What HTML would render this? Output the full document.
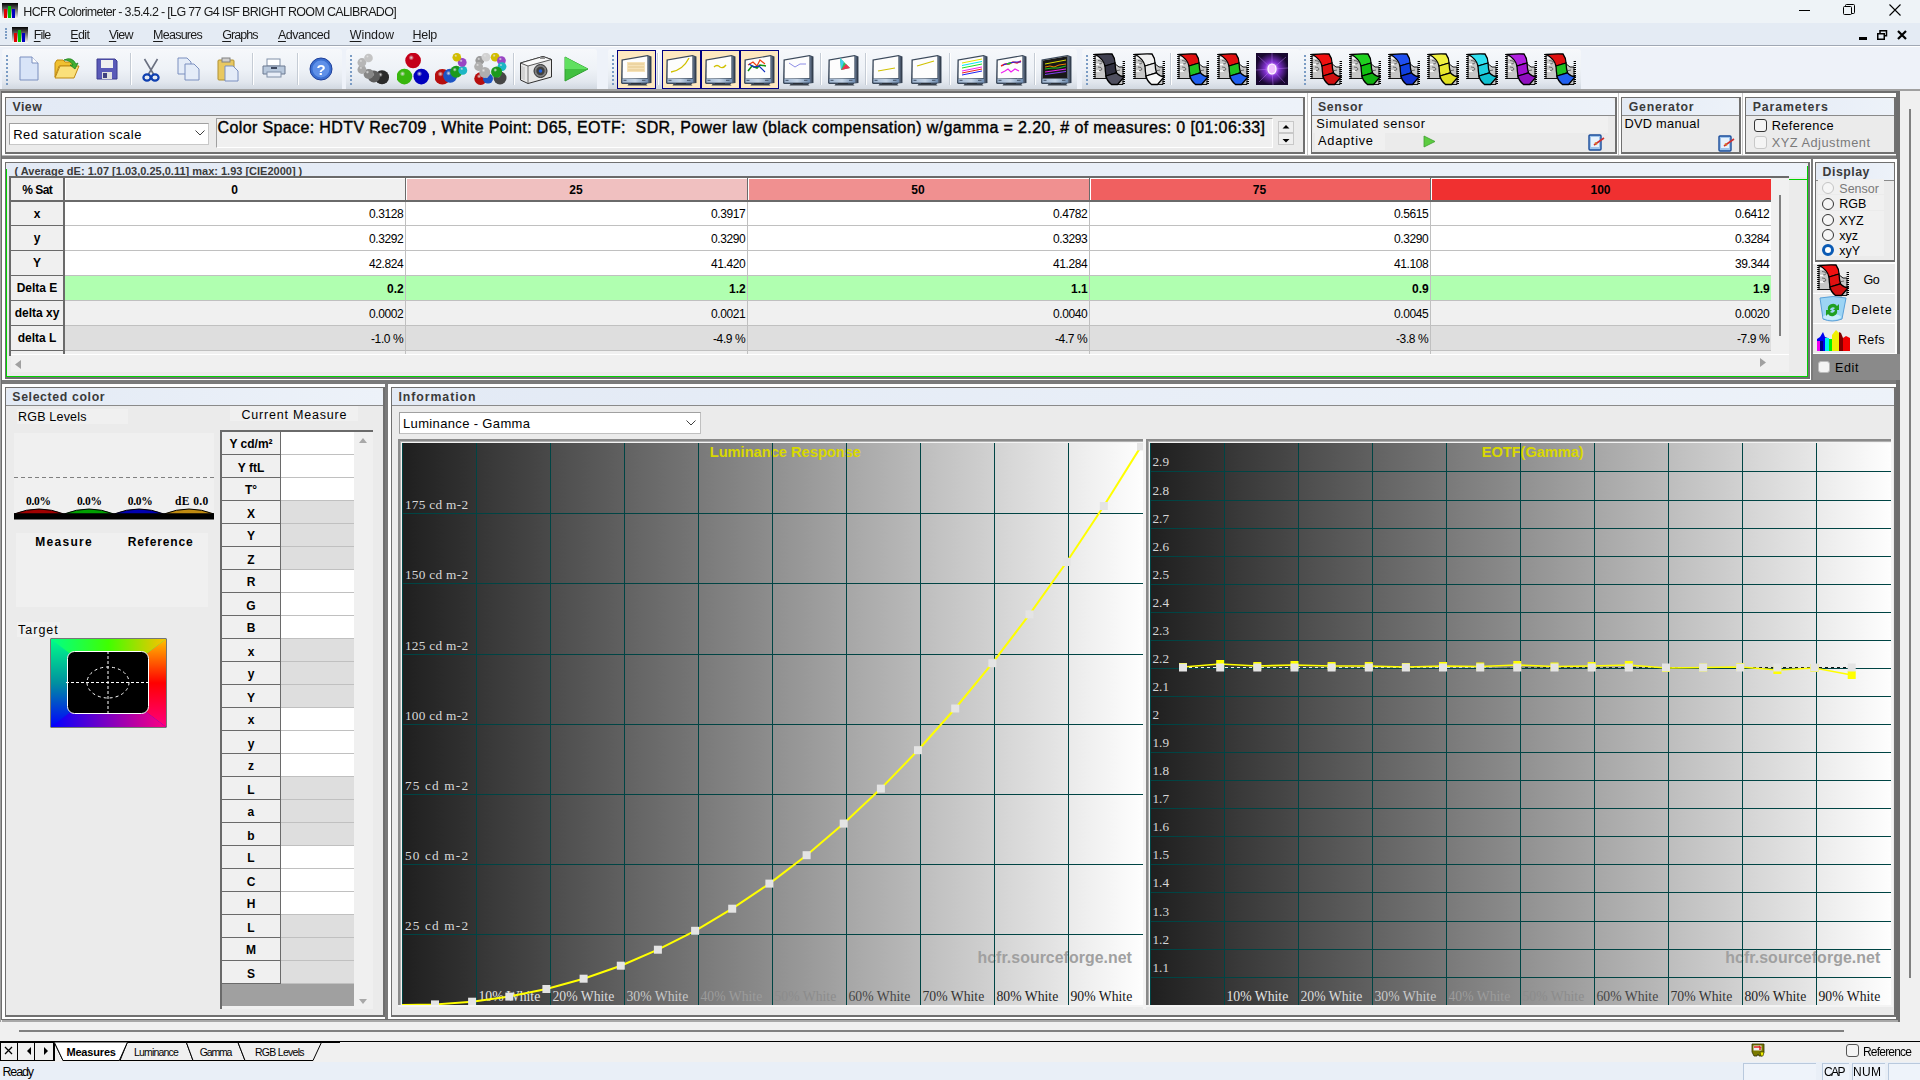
<!DOCTYPE html><html><head><meta charset="utf-8"><style>
*{margin:0;padding:0;box-sizing:border-box}
html,body{width:1920px;height:1080px;overflow:hidden;background:#f0f0f0;font-family:"Liberation Sans", sans-serif;}
.a{position:absolute}
.t{white-space:pre;line-height:1;font-size:12px;color:#000}
</style></head><body><div class="a" style="left:0px;top:0px;width:1920px;height:23px;background:#eef3f7"></div>
<svg class="a" style="left:2px;top:3px" width="16" height="16" viewBox="0 0 16 16"><defs><linearGradient id="hg" x1="0" y1="0" x2="0" y2="1"><stop offset="0" stop-color="#000"/><stop offset="1" stop-color="#fff"/></linearGradient></defs><rect x="0" y="0" width="16" height="16" fill="url(#hg)"/><rect x="2" y="6" width="3" height="9" fill="#e00000"/><rect x="6" y="3" width="3" height="12" fill="#00c000"/><rect x="10" y="6" width="3" height="9" fill="#0000c0"/></svg>
<div class="a t" style="left:23.30px;top:5.76px;font-size:12.5px;color:#1a1a1a;letter-spacing:-0.663px;">HCFR Colorimeter - 3.5.4.2 - [LG 77 G4 ISF BRIGHT ROOM CALIBRADO]</div>
<div class="a" style="left:1799px;top:10px;width:11px;height:1px;background:#000"></div>
<svg class="a" style="left:1843px;top:4px" width="12" height="12" viewBox="0 0 12 12"><rect x="0.5" y="2.5" width="8" height="8" rx="1" fill="none" stroke="#000"/><path d="M2.5 2.5 V1.5 Q2.5 0.5 3.5 0.5 H10.5 Q11.5 0.5 11.5 1.5 V8.5 Q11.5 9.5 10.5 9.5 H8.5" fill="none" stroke="#000"/></svg>
<svg class="a" style="left:1889px;top:4px" width="12" height="12" viewBox="0 0 12 12"><path d="M0.5 0.5 L11.5 11.5 M11.5 0.5 L0.5 11.5" stroke="#000" stroke-width="1.1"/></svg>
<div class="a" style="left:0px;top:23px;width:1920px;height:22px;background:#e4ebf4"></div>
<div class="a" style="left:5px;top:28px;width:2px;height:2px;background:#7b9cc4"></div>
<div class="a" style="left:5px;top:31px;width:2px;height:2px;background:#7b9cc4"></div>
<div class="a" style="left:5px;top:34px;width:2px;height:2px;background:#7b9cc4"></div>
<div class="a" style="left:5px;top:37px;width:2px;height:2px;background:#7b9cc4"></div>
<svg class="a" style="left:12px;top:27px" width="16" height="16" viewBox="0 0 16 16"><defs><linearGradient id="hg" x1="0" y1="0" x2="0" y2="1"><stop offset="0" stop-color="#000"/><stop offset="1" stop-color="#fff"/></linearGradient></defs><rect x="0" y="0" width="16" height="16" fill="url(#hg)"/><rect x="2" y="6" width="3" height="9" fill="#e00000"/><rect x="6" y="3" width="3" height="12" fill="#00c000"/><rect x="10" y="6" width="3" height="9" fill="#0000c0"/></svg>
<div class="a t" style="left:33.80px;top:28.76px;font-size:12.5px;color:#1a1a1a;letter-spacing:-0.912px;"><span style="text-decoration:underline;text-underline-offset:2px">F</span>ile</div>
<div class="a t" style="left:70.30px;top:28.76px;font-size:12.5px;color:#1a1a1a;letter-spacing:-0.612px;"><span style="text-decoration:underline;text-underline-offset:2px">E</span>dit</div>
<div class="a t" style="left:108.90px;top:28.76px;font-size:12.5px;color:#1a1a1a;letter-spacing:-0.733px;"><span style="text-decoration:underline;text-underline-offset:2px">V</span>iew</div>
<div class="a t" style="left:153.10px;top:28.76px;font-size:12.5px;color:#1a1a1a;letter-spacing:-0.755px;"><span style="text-decoration:underline;text-underline-offset:2px">M</span>easures</div>
<div class="a t" style="left:222.20px;top:28.76px;font-size:12.5px;color:#1a1a1a;letter-spacing:-0.937px;"><span style="text-decoration:underline;text-underline-offset:2px">G</span>raphs</div>
<div class="a t" style="left:278.00px;top:28.76px;font-size:12.5px;color:#1a1a1a;letter-spacing:-0.486px;"><span style="text-decoration:underline;text-underline-offset:2px">A</span>dvanced</div>
<div class="a t" style="left:349.70px;top:28.76px;font-size:12.5px;color:#1a1a1a;letter-spacing:-0.037px;"><span style="text-decoration:underline;text-underline-offset:2px">W</span>indow</div>
<div class="a t" style="left:412.60px;top:28.76px;font-size:12.5px;color:#1a1a1a;letter-spacing:-0.338px;"><span style="text-decoration:underline;text-underline-offset:2px">H</span>elp</div>
<div class="a" style="left:1859px;top:37px;width:8px;height:3px;background:#000"></div>
<svg class="a" style="left:1877px;top:30px" width="11" height="10" viewBox="0 0 11 10"><rect x="3" y="0.75" width="6.5" height="5" fill="none" stroke="#000" stroke-width="1.5"/><rect x="0.75" y="3.75" width="6.5" height="5.5" fill="#e4ebf4" stroke="#000" stroke-width="1.5"/></svg>
<svg class="a" style="left:1897px;top:30px" width="10" height="10" viewBox="0 0 10 10"><path d="M1 1 L9 9 M9 1 L1 9" stroke="#000" stroke-width="2.2"/></svg>
<div class="a" style="left:0px;top:45px;width:1920px;height:1px;background:#a0a8b4"></div>
<div class="a" style="left:0px;top:46px;width:1920px;height:1px;background:#fff"></div>
<div class="a" style="left:0px;top:47px;width:1920px;height:42px;background:#eef2f9"></div>
<div class="a" style="left:2px;top:49px;width:340px;height:41px;background:linear-gradient(#f6f8fb,#eef2f7 50%,#e2e7ee 80%,#cfd6df);border-radius:3px 3px 0 0"></div>
<div class="a" style="left:6px;top:55px;width:2px;height:2px;background:#7b9cc4"></div>
<div class="a" style="left:6px;top:59px;width:2px;height:2px;background:#7b9cc4"></div>
<div class="a" style="left:6px;top:63px;width:2px;height:2px;background:#7b9cc4"></div>
<div class="a" style="left:6px;top:67px;width:2px;height:2px;background:#7b9cc4"></div>
<div class="a" style="left:6px;top:71px;width:2px;height:2px;background:#7b9cc4"></div>
<div class="a" style="left:6px;top:75px;width:2px;height:2px;background:#7b9cc4"></div>
<div class="a" style="left:6px;top:79px;width:2px;height:2px;background:#7b9cc4"></div>
<div class="a" style="left:6px;top:83px;width:2px;height:2px;background:#7b9cc4"></div>
<div class="a" style="left:346px;top:49px;width:251px;height:41px;background:linear-gradient(#f6f8fb,#eef2f7 50%,#e2e7ee 80%,#cfd6df);border-radius:3px 3px 0 0"></div>
<div class="a" style="left:350px;top:55px;width:2px;height:2px;background:#7b9cc4"></div>
<div class="a" style="left:350px;top:59px;width:2px;height:2px;background:#7b9cc4"></div>
<div class="a" style="left:350px;top:63px;width:2px;height:2px;background:#7b9cc4"></div>
<div class="a" style="left:350px;top:67px;width:2px;height:2px;background:#7b9cc4"></div>
<div class="a" style="left:350px;top:71px;width:2px;height:2px;background:#7b9cc4"></div>
<div class="a" style="left:350px;top:75px;width:2px;height:2px;background:#7b9cc4"></div>
<div class="a" style="left:350px;top:79px;width:2px;height:2px;background:#7b9cc4"></div>
<div class="a" style="left:350px;top:83px;width:2px;height:2px;background:#7b9cc4"></div>
<div class="a" style="left:608px;top:49px;width:469px;height:41px;background:linear-gradient(#f6f8fb,#eef2f7 50%,#e2e7ee 80%,#cfd6df);border-radius:3px 3px 0 0"></div>
<div class="a" style="left:612px;top:55px;width:2px;height:2px;background:#7b9cc4"></div>
<div class="a" style="left:612px;top:59px;width:2px;height:2px;background:#7b9cc4"></div>
<div class="a" style="left:612px;top:63px;width:2px;height:2px;background:#7b9cc4"></div>
<div class="a" style="left:612px;top:67px;width:2px;height:2px;background:#7b9cc4"></div>
<div class="a" style="left:612px;top:71px;width:2px;height:2px;background:#7b9cc4"></div>
<div class="a" style="left:612px;top:75px;width:2px;height:2px;background:#7b9cc4"></div>
<div class="a" style="left:612px;top:79px;width:2px;height:2px;background:#7b9cc4"></div>
<div class="a" style="left:612px;top:83px;width:2px;height:2px;background:#7b9cc4"></div>
<div class="a" style="left:1082px;top:49px;width:218px;height:41px;background:linear-gradient(#f6f8fb,#eef2f7 50%,#e2e7ee 80%,#cfd6df);border-radius:3px 3px 0 0"></div>
<div class="a" style="left:1086px;top:55px;width:2px;height:2px;background:#7b9cc4"></div>
<div class="a" style="left:1086px;top:59px;width:2px;height:2px;background:#7b9cc4"></div>
<div class="a" style="left:1086px;top:63px;width:2px;height:2px;background:#7b9cc4"></div>
<div class="a" style="left:1086px;top:67px;width:2px;height:2px;background:#7b9cc4"></div>
<div class="a" style="left:1086px;top:71px;width:2px;height:2px;background:#7b9cc4"></div>
<div class="a" style="left:1086px;top:75px;width:2px;height:2px;background:#7b9cc4"></div>
<div class="a" style="left:1086px;top:79px;width:2px;height:2px;background:#7b9cc4"></div>
<div class="a" style="left:1086px;top:83px;width:2px;height:2px;background:#7b9cc4"></div>
<div class="a" style="left:1300px;top:49px;width:281px;height:41px;background:linear-gradient(#f6f8fb,#eef2f7 50%,#e2e7ee 80%,#cfd6df);border-radius:3px 3px 0 0"></div>
<div class="a" style="left:1304px;top:55px;width:2px;height:2px;background:#7b9cc4"></div>
<div class="a" style="left:1304px;top:59px;width:2px;height:2px;background:#7b9cc4"></div>
<div class="a" style="left:1304px;top:63px;width:2px;height:2px;background:#7b9cc4"></div>
<div class="a" style="left:1304px;top:67px;width:2px;height:2px;background:#7b9cc4"></div>
<div class="a" style="left:1304px;top:71px;width:2px;height:2px;background:#7b9cc4"></div>
<div class="a" style="left:1304px;top:75px;width:2px;height:2px;background:#7b9cc4"></div>
<div class="a" style="left:1304px;top:79px;width:2px;height:2px;background:#7b9cc4"></div>
<div class="a" style="left:1304px;top:83px;width:2px;height:2px;background:#7b9cc4"></div>
<svg class="a" style="left:19px;top:56px" width="20" height="25" viewBox="0 0 20 25"><path d="M1 1 H13 L19 7 V24 H1 Z" fill="#d8e4f8" stroke="#7a8fbf"/><path d="M13 1 V7 H19" fill="#fff" stroke="#7a8fbf"/></svg>
<svg class="a" style="left:54px;top:57px" width="26" height="23" viewBox="0 0 26 23"><path d="M1 6 L3 3 H9 L11 5 H19 V9 H5 L1 20 Z" fill="#f0c030" stroke="#c08a10"/><path d="M1 21 L6 9 H25 L20 21 Z" fill="#fae07a" stroke="#c08a10"/><path d="M10 3 Q18 -1 22 7 L24 6 L21 12 L16 8 L19 8 Q16 3 10 3Z" fill="#40b030" stroke="#208020" stroke-width="0.8"/></svg>
<svg class="a" style="left:96px;top:58px" width="22" height="22" viewBox="0 0 22 22"><path d="M1 1 H19 L21 3 V21 H1 Z" fill="#5a5ab8" stroke="#3a3a90"/><rect x="5" y="2" width="12" height="8" fill="#f0f0f0"/><rect x="6" y="14" width="10" height="7" fill="#e0e0e0"/><rect x="7" y="15" width="4" height="5" fill="#404080"/></svg>
<div class="a" style="left:130px;top:53px;width:1px;height:32px;background:#c5ccd5"></div>
<div class="a" style="left:131px;top:53px;width:1px;height:32px;background:#fff"></div>
<svg class="a" style="left:142px;top:58px" width="18" height="24" viewBox="0 0 18 24"><path d="M2.5 1 L12 17 M15.5 1 L6 17" stroke="#6a7080" stroke-width="1.6"/><ellipse cx="5" cy="19.5" rx="3.6" ry="3.2" fill="none" stroke="#1040b0" stroke-width="2.2"/><ellipse cx="13" cy="19.5" rx="3.6" ry="3.2" fill="none" stroke="#1040b0" stroke-width="2.2"/></svg>
<svg class="a" style="left:177px;top:57px" width="24" height="24" viewBox="0 0 24 24"><path d="M1 1 H10 L14 5 V17 H1 Z" fill="#e4ecf8" stroke="#7a8fbf"/><path d="M8 7 H17 L22 12 V23 H8 Z" fill="#e4ecf8" stroke="#7a8fbf"/></svg>
<svg class="a" style="left:217px;top:57px" width="22" height="25" viewBox="0 0 22 25"><rect x="1" y="3" width="16" height="20" rx="1" fill="#e8c860" stroke="#b09030"/><rect x="5" y="1" width="8" height="4" fill="#d0d0d0" stroke="#808080"/><path d="M8 9 H16 L21 14 V24 H8 Z" fill="#e4ecf8" stroke="#7a8fbf"/></svg>
<div class="a" style="left:252px;top:53px;width:1px;height:32px;background:#c5ccd5"></div>
<div class="a" style="left:253px;top:53px;width:1px;height:32px;background:#fff"></div>
<svg class="a" style="left:262px;top:58px" width="24" height="20" viewBox="0 0 24 20"><rect x="5" y="1" width="13" height="7" fill="#fff" stroke="#8090a8"/><path d="M1 8 H23 V16 H1 Z" fill="#b8c8dc" stroke="#6a7890"/><rect x="5" y="14" width="14" height="5" fill="#e8eef8" stroke="#8090a8"/><rect x="9" y="9" width="6" height="2" fill="#404a60"/></svg>
<div class="a" style="left:297px;top:53px;width:1px;height:32px;background:#c5ccd5"></div>
<div class="a" style="left:298px;top:53px;width:1px;height:32px;background:#fff"></div>
<svg class="a" style="left:309px;top:57px" width="24" height="24" viewBox="0 0 24 24"><circle cx="12" cy="12" r="11" fill="#3a6ed0" stroke="#20409a"/><circle cx="12" cy="12" r="8.5" fill="#5f90e8"/><text x="12" y="17.5" font-family="Liberation Sans" font-weight="bold" font-size="15" fill="#fff" text-anchor="middle">?</text></svg>
<svg class="a" style="left:357px;top:53px" width="33" height="33" viewBox="0 0 33 33"><defs><radialGradient id="bg1" cx="0.38" cy="0.32" r="0.7"><stop offset="0" stop-color="#fff"/><stop offset="0.25" stop-color="#303030"/><stop offset="1" stop-color="#303030" stop-opacity="1"/></radialGradient></defs><circle cx="25" cy="24.2" r="7" fill="url(#bg1)"/><circle cx="25" cy="24.2" r="7" fill="#000" opacity="0.12" style="mix-blend-mode:multiply"/><defs><radialGradient id="bg2" cx="0.38" cy="0.32" r="0.7"><stop offset="0" stop-color="#fff"/><stop offset="0.25" stop-color="#6a6a6a"/><stop offset="1" stop-color="#6a6a6a" stop-opacity="1"/></radialGradient></defs><circle cx="16.9" cy="23.6" r="6" fill="url(#bg2)"/><circle cx="16.9" cy="23.6" r="6" fill="#000" opacity="0.12" style="mix-blend-mode:multiply"/><defs><radialGradient id="bg3" cx="0.38" cy="0.32" r="0.7"><stop offset="0" stop-color="#fff"/><stop offset="0.25" stop-color="#9a9a9a"/><stop offset="1" stop-color="#9a9a9a" stop-opacity="1"/></radialGradient></defs><circle cx="11.6" cy="20.9" r="5" fill="url(#bg3)"/><circle cx="11.6" cy="20.9" r="5" fill="#000" opacity="0.12" style="mix-blend-mode:multiply"/><defs><radialGradient id="bg4" cx="0.38" cy="0.32" r="0.7"><stop offset="0" stop-color="#fff"/><stop offset="0.25" stop-color="#c0c0c0"/><stop offset="1" stop-color="#c0c0c0" stop-opacity="1"/></radialGradient></defs><circle cx="4.9" cy="16.5" r="4.4" fill="url(#bg4)"/><circle cx="4.9" cy="16.5" r="4.4" fill="#000" opacity="0.12" style="mix-blend-mode:multiply"/><defs><radialGradient id="bg5" cx="0.38" cy="0.32" r="0.7"><stop offset="0" stop-color="#fff"/><stop offset="0.25" stop-color="#d0d0d0"/><stop offset="1" stop-color="#d0d0d0" stop-opacity="1"/></radialGradient></defs><circle cx="4.9" cy="9.5" r="4.4" fill="url(#bg5)"/><circle cx="4.9" cy="9.5" r="4.4" fill="#000" opacity="0.12" style="mix-blend-mode:multiply"/><defs><radialGradient id="bg6" cx="0.38" cy="0.32" r="0.7"><stop offset="0" stop-color="#fff"/><stop offset="0.25" stop-color="#e0e0e0"/><stop offset="1" stop-color="#e0e0e0" stop-opacity="1"/></radialGradient></defs><circle cx="11.5" cy="5" r="4.3" fill="url(#bg6)"/><circle cx="11.5" cy="5" r="4.3" fill="#000" opacity="0.12" style="mix-blend-mode:multiply"/></svg>
<svg class="a" style="left:397px;top:53px" width="33" height="33" viewBox="0 0 33 33"><defs><radialGradient id="bg7" cx="0.38" cy="0.32" r="0.7"><stop offset="0" stop-color="#fff"/><stop offset="0.25" stop-color="#e0001c"/><stop offset="1" stop-color="#e0001c" stop-opacity="1"/></radialGradient></defs><circle cx="16.1" cy="7.5" r="7.8" fill="url(#bg7)"/><circle cx="16.1" cy="7.5" r="7.8" fill="#000" opacity="0.12" style="mix-blend-mode:multiply"/><defs><radialGradient id="bg8" cx="0.38" cy="0.32" r="0.7"><stop offset="0" stop-color="#fff"/><stop offset="0.25" stop-color="#40d010"/><stop offset="1" stop-color="#40d010" stop-opacity="1"/></radialGradient></defs><circle cx="7.4" cy="23.6" r="7.8" fill="url(#bg8)"/><circle cx="7.4" cy="23.6" r="7.8" fill="#000" opacity="0.12" style="mix-blend-mode:multiply"/><defs><radialGradient id="bg9" cx="0.38" cy="0.32" r="0.7"><stop offset="0" stop-color="#fff"/><stop offset="0.25" stop-color="#0000d8"/><stop offset="1" stop-color="#0000d8" stop-opacity="1"/></radialGradient></defs><circle cx="24.3" cy="23.6" r="7.8" fill="url(#bg9)"/><circle cx="24.3" cy="23.6" r="7.8" fill="#000" opacity="0.12" style="mix-blend-mode:multiply"/></svg>
<svg class="a" style="left:435px;top:53px" width="33" height="33" viewBox="0 0 33 33"><defs><radialGradient id="bg10" cx="0.38" cy="0.32" r="0.7"><stop offset="0" stop-color="#fff"/><stop offset="0.25" stop-color="#d01010"/><stop offset="1" stop-color="#d01010" stop-opacity="1"/></radialGradient></defs><circle cx="7.3" cy="23.8" r="7.8" fill="url(#bg10)"/><circle cx="7.3" cy="23.8" r="7.8" fill="#000" opacity="0.12" style="mix-blend-mode:multiply"/><defs><radialGradient id="bg11" cx="0.38" cy="0.32" r="0.7"><stop offset="0" stop-color="#fff"/><stop offset="0.25" stop-color="#2060e0"/><stop offset="1" stop-color="#2060e0" stop-opacity="1"/></radialGradient></defs><circle cx="15.2" cy="22.8" r="7" fill="url(#bg11)"/><circle cx="15.2" cy="22.8" r="7" fill="#000" opacity="0.12" style="mix-blend-mode:multiply"/><defs><radialGradient id="bg12" cx="0.38" cy="0.32" r="0.7"><stop offset="0" stop-color="#fff"/><stop offset="0.25" stop-color="#20b020"/><stop offset="1" stop-color="#20b020" stop-opacity="1"/></radialGradient></defs><circle cx="21.2" cy="18.8" r="6" fill="url(#bg12)"/><circle cx="21.2" cy="18.8" r="6" fill="#000" opacity="0.12" style="mix-blend-mode:multiply"/><defs><radialGradient id="bg13" cx="0.38" cy="0.32" r="0.7"><stop offset="0" stop-color="#fff"/><stop offset="0.25" stop-color="#20d0e0"/><stop offset="1" stop-color="#20d0e0" stop-opacity="1"/></radialGradient></defs><circle cx="27.8" cy="17.4" r="4.4" fill="url(#bg13)"/><circle cx="27.8" cy="17.4" r="4.4" fill="#000" opacity="0.12" style="mix-blend-mode:multiply"/><defs><radialGradient id="bg14" cx="0.38" cy="0.32" r="0.7"><stop offset="0" stop-color="#fff"/><stop offset="0.25" stop-color="#b050e0"/><stop offset="1" stop-color="#b050e0" stop-opacity="1"/></radialGradient></defs><circle cx="27.2" cy="9.4" r="4.4" fill="url(#bg14)"/><circle cx="27.2" cy="9.4" r="4.4" fill="#000" opacity="0.12" style="mix-blend-mode:multiply"/><defs><radialGradient id="bg15" cx="0.38" cy="0.32" r="0.7"><stop offset="0" stop-color="#fff"/><stop offset="0.25" stop-color="#f0d800"/><stop offset="1" stop-color="#f0d800" stop-opacity="1"/></radialGradient></defs><circle cx="21.8" cy="4.3" r="4.3" fill="url(#bg15)"/><circle cx="21.8" cy="4.3" r="4.3" fill="#000" opacity="0.12" style="mix-blend-mode:multiply"/></svg>
<svg class="a" style="left:474px;top:53px" width="33" height="33" viewBox="0 0 33 33"><defs><radialGradient id="bg16" cx="0.38" cy="0.32" r="0.7"><stop offset="0" stop-color="#fff"/><stop offset="0.25" stop-color="#b0b0b0"/><stop offset="1" stop-color="#b0b0b0" stop-opacity="1"/></radialGradient></defs><circle cx="5.8" cy="7.5" r="4.4" fill="url(#bg16)"/><circle cx="5.8" cy="7.5" r="4.4" fill="#000" opacity="0.12" style="mix-blend-mode:multiply"/><defs><radialGradient id="bg17" cx="0.38" cy="0.32" r="0.7"><stop offset="0" stop-color="#fff"/><stop offset="0.25" stop-color="#c8c8c8"/><stop offset="1" stop-color="#c8c8c8" stop-opacity="1"/></radialGradient></defs><circle cx="4.6" cy="13.5" r="4.4" fill="url(#bg17)"/><circle cx="4.6" cy="13.5" r="4.4" fill="#000" opacity="0.12" style="mix-blend-mode:multiply"/><defs><radialGradient id="bg18" cx="0.38" cy="0.32" r="0.7"><stop offset="0" stop-color="#fff"/><stop offset="0.25" stop-color="#f0f0f0"/><stop offset="1" stop-color="#f0f0f0" stop-opacity="1"/></radialGradient></defs><circle cx="12" cy="4.2" r="4.4" fill="url(#bg18)"/><circle cx="12" cy="4.2" r="4.4" fill="#000" opacity="0.12" style="mix-blend-mode:multiply"/><defs><radialGradient id="bg19" cx="0.38" cy="0.32" r="0.7"><stop offset="0" stop-color="#fff"/><stop offset="0.25" stop-color="#f0d800"/><stop offset="1" stop-color="#f0d800" stop-opacity="1"/></radialGradient></defs><circle cx="21.2" cy="4.2" r="4.4" fill="url(#bg19)"/><circle cx="21.2" cy="4.2" r="4.4" fill="#000" opacity="0.12" style="mix-blend-mode:multiply"/><defs><radialGradient id="bg20" cx="0.38" cy="0.32" r="0.7"><stop offset="0" stop-color="#fff"/><stop offset="0.25" stop-color="#b050e0"/><stop offset="1" stop-color="#b050e0" stop-opacity="1"/></radialGradient></defs><circle cx="27.4" cy="7.6" r="4.4" fill="url(#bg20)"/><circle cx="27.4" cy="7.6" r="4.4" fill="#000" opacity="0.12" style="mix-blend-mode:multiply"/><defs><radialGradient id="bg21" cx="0.38" cy="0.32" r="0.7"><stop offset="0" stop-color="#fff"/><stop offset="0.25" stop-color="#20d0e0"/><stop offset="1" stop-color="#20d0e0" stop-opacity="1"/></radialGradient></defs><circle cx="28" cy="13.6" r="4.4" fill="url(#bg21)"/><circle cx="28" cy="13.6" r="4.4" fill="#000" opacity="0.12" style="mix-blend-mode:multiply"/><defs><radialGradient id="bg22" cx="0.38" cy="0.32" r="0.7"><stop offset="0" stop-color="#fff"/><stop offset="0.25" stop-color="#d01010"/><stop offset="1" stop-color="#d01010" stop-opacity="1"/></radialGradient></defs><circle cx="6.6" cy="25.6" r="6.3" fill="url(#bg22)"/><circle cx="6.6" cy="25.6" r="6.3" fill="#000" opacity="0.12" style="mix-blend-mode:multiply"/><defs><radialGradient id="bg23" cx="0.38" cy="0.32" r="0.7"><stop offset="0" stop-color="#fff"/><stop offset="0.25" stop-color="#2060e0"/><stop offset="1" stop-color="#2060e0" stop-opacity="1"/></radialGradient></defs><circle cx="14" cy="25.6" r="5" fill="url(#bg23)"/><circle cx="14" cy="25.6" r="5" fill="#000" opacity="0.12" style="mix-blend-mode:multiply"/><defs><radialGradient id="bg24" cx="0.38" cy="0.32" r="0.7"><stop offset="0" stop-color="#fff"/><stop offset="0.25" stop-color="#505050"/><stop offset="1" stop-color="#505050" stop-opacity="1"/></radialGradient></defs><circle cx="26" cy="25" r="6.5" fill="url(#bg24)"/><circle cx="26" cy="25" r="6.5" fill="#000" opacity="0.12" style="mix-blend-mode:multiply"/><defs><radialGradient id="bg25" cx="0.38" cy="0.32" r="0.7"><stop offset="0" stop-color="#fff"/><stop offset="0.25" stop-color="#20b020"/><stop offset="1" stop-color="#20b020" stop-opacity="1"/></radialGradient></defs><circle cx="22.6" cy="19" r="5.5" fill="url(#bg25)"/><circle cx="22.6" cy="19" r="5.5" fill="#000" opacity="0.12" style="mix-blend-mode:multiply"/><defs><radialGradient id="bg26" cx="0.38" cy="0.32" r="0.7"><stop offset="0" stop-color="#fff"/><stop offset="0.25" stop-color="#c8c8c8"/><stop offset="1" stop-color="#c8c8c8" stop-opacity="1"/></radialGradient></defs><circle cx="10.8" cy="19.4" r="5.5" fill="url(#bg26)"/><circle cx="10.8" cy="19.4" r="5.5" fill="#000" opacity="0.12" style="mix-blend-mode:multiply"/></svg>
<div class="a" style="left:513px;top:53px;width:1px;height:32px;background:#c5ccd5"></div>
<div class="a" style="left:514px;top:53px;width:1px;height:32px;background:#fff"></div>
<svg class="a" style="left:519px;top:54px" width="34" height="30" viewBox="0 0 34 30"><path d="M1.5 9 L24 2.5 L32.5 5.5 V23 L9 29.5 L1.5 26Z" fill="#e8e8e8" stroke="#303030" stroke-width="1"/><path d="M1.5 9 L24 2.5 L32.5 5.5 L9 12Z" fill="#fafafa" stroke="#303030" stroke-width="0.8"/><path d="M9 12 V29.5" stroke="#505050" stroke-width="0.8"/><path d="M3 12 V25 M5 13 V26" stroke="#a0a0a0" stroke-width="0.6"/><rect x="21" y="3" width="5" height="2" fill="#909090"/><circle cx="21.5" cy="17" r="6.5" fill="#808080" stroke="#303030"/><circle cx="21.5" cy="17" r="4.2" fill="#404040"/><circle cx="21.5" cy="17" r="1.8" fill="#2060e0"/></svg>
<svg class="a" style="left:563px;top:56px" width="26" height="26" viewBox="0 0 26 26"><path d="M2 1 L25 13 L2 25 Z" fill="#40c040" stroke="#30a030"/><path d="M2 1 L25 13 L2 13 Z" fill="#60e060"/></svg>
<div class="a" style="left:617px;top:50px;width:39px;height:39px;background:#fde8c0;border:1px solid #000080"></div>
<svg class="a" style="left:620px;top:53px" width="33" height="33" viewBox="0 0 33 33"><defs><linearGradient id="bz" x1="0" x2="1"><stop offset="0" stop-color="#9fb6d2"/><stop offset="0.5" stop-color="#c4d4e6"/><stop offset="1" stop-color="#6f8db2"/></linearGradient><linearGradient id="rs" x1="0" x2="1"><stop offset="0" stop-color="#6a7c96"/><stop offset="1" stop-color="#2a3442"/></linearGradient></defs><path d="M1.5 6.5 L27.5 2 L31.5 3.5 V30 L27 30.5 V31 H2 L1 30 Z" fill="#3c4a5c"/><path d="M2.8 7.4 L27.4 3.2 V25 L2.6 25.6Z" fill="#fdfdfd"/><path d="M28.2 3.2 L30.8 4.2 V29.4 L28.2 29.8Z" fill="url(#rs)"/><path d="M2.4 25.8 H28 V29.6 H2.4Z" fill="url(#bz)"/><rect x="3.5" y="26.8" width="3" height="1.2" fill="#55657a"/><rect x="22" y="26.8" width="3.5" height="1.2" fill="#55657a"/><path d="M11 30 H21 V31 H11Z" fill="#2a3038"/><path d="M8.5 31 H26 L27.5 32.6 H7.5Z" fill="#3a424c"/><path d="M7 9 H25 V19 H7Z" fill="#f6e2b8"/><path d="M8 11H24M8 14H24M8 17H24" stroke="#e0c080" stroke-width="0.8"/></svg>
<div class="a" style="left:657px;top:53px;width:1px;height:32px;background:#c5ccd5"></div>
<div class="a" style="left:658px;top:53px;width:1px;height:32px;background:#fff"></div>
<div class="a" style="left:662px;top:50px;width:39px;height:39px;background:#fde8c0;border:1px solid #000080"></div>
<svg class="a" style="left:665px;top:53px" width="33" height="33" viewBox="0 0 33 33"><defs><linearGradient id="bz" x1="0" x2="1"><stop offset="0" stop-color="#9fb6d2"/><stop offset="0.5" stop-color="#c4d4e6"/><stop offset="1" stop-color="#6f8db2"/></linearGradient><linearGradient id="rs" x1="0" x2="1"><stop offset="0" stop-color="#6a7c96"/><stop offset="1" stop-color="#2a3442"/></linearGradient></defs><path d="M1.5 6.5 L27.5 2 L31.5 3.5 V30 L27 30.5 V31 H2 L1 30 Z" fill="#3c4a5c"/><path d="M2.8 7.4 L27.4 3.2 V25 L2.6 25.6Z" fill="#fdfdfd"/><path d="M28.2 3.2 L30.8 4.2 V29.4 L28.2 29.8Z" fill="url(#rs)"/><path d="M2.4 25.8 H28 V29.6 H2.4Z" fill="url(#bz)"/><rect x="3.5" y="26.8" width="3" height="1.2" fill="#55657a"/><rect x="22" y="26.8" width="3.5" height="1.2" fill="#55657a"/><path d="M11 30 H21 V31 H11Z" fill="#2a3038"/><path d="M8.5 31 H26 L27.5 32.6 H7.5Z" fill="#3a424c"/><path d="M6 19 Q18 17 24 5" fill="none" stroke="#d0c000" stroke-width="1.3"/></svg>
<div class="a" style="left:701px;top:50px;width:39px;height:39px;background:#fde8c0;border:1px solid #000080"></div>
<svg class="a" style="left:704px;top:53px" width="33" height="33" viewBox="0 0 33 33"><defs><linearGradient id="bz" x1="0" x2="1"><stop offset="0" stop-color="#9fb6d2"/><stop offset="0.5" stop-color="#c4d4e6"/><stop offset="1" stop-color="#6f8db2"/></linearGradient><linearGradient id="rs" x1="0" x2="1"><stop offset="0" stop-color="#6a7c96"/><stop offset="1" stop-color="#2a3442"/></linearGradient></defs><path d="M1.5 6.5 L27.5 2 L31.5 3.5 V30 L27 30.5 V31 H2 L1 30 Z" fill="#3c4a5c"/><path d="M2.8 7.4 L27.4 3.2 V25 L2.6 25.6Z" fill="#fdfdfd"/><path d="M28.2 3.2 L30.8 4.2 V29.4 L28.2 29.8Z" fill="url(#rs)"/><path d="M2.4 25.8 H28 V29.6 H2.4Z" fill="url(#bz)"/><rect x="3.5" y="26.8" width="3" height="1.2" fill="#55657a"/><rect x="22" y="26.8" width="3.5" height="1.2" fill="#55657a"/><path d="M11 30 H21 V31 H11Z" fill="#2a3038"/><path d="M8.5 31 H26 L27.5 32.6 H7.5Z" fill="#3a424c"/><path d="M10 14 Q13 11 16 14 Q19 16 22 12" fill="none" stroke="#d0c000" stroke-width="1.3"/></svg>
<div class="a" style="left:740px;top:50px;width:39px;height:39px;background:#fde8c0;border:1px solid #000080"></div>
<svg class="a" style="left:743px;top:53px" width="33" height="33" viewBox="0 0 33 33"><defs><linearGradient id="bz" x1="0" x2="1"><stop offset="0" stop-color="#9fb6d2"/><stop offset="0.5" stop-color="#c4d4e6"/><stop offset="1" stop-color="#6f8db2"/></linearGradient><linearGradient id="rs" x1="0" x2="1"><stop offset="0" stop-color="#6a7c96"/><stop offset="1" stop-color="#2a3442"/></linearGradient></defs><path d="M1.5 6.5 L27.5 2 L31.5 3.5 V30 L27 30.5 V31 H2 L1 30 Z" fill="#3c4a5c"/><path d="M2.8 7.4 L27.4 3.2 V25 L2.6 25.6Z" fill="#fdfdfd"/><path d="M28.2 3.2 L30.8 4.2 V29.4 L28.2 29.8Z" fill="url(#rs)"/><path d="M2.4 25.8 H28 V29.6 H2.4Z" fill="url(#bz)"/><rect x="3.5" y="26.8" width="3" height="1.2" fill="#55657a"/><rect x="22" y="26.8" width="3.5" height="1.2" fill="#55657a"/><path d="M11 30 H21 V31 H11Z" fill="#2a3038"/><path d="M8.5 31 H26 L27.5 32.6 H7.5Z" fill="#3a424c"/><path d="M5 12 L10 9 L14 13 L17 7 L22 11" fill="none" stroke="#f04010" stroke-width="1.2"/><path d="M5 18 L9 13 L14 15 L17 12 L23 13" fill="none" stroke="#109010" stroke-width="1.5"/><path d="M6 11 L11 14 L16 13 L22 19" fill="none" stroke="#1030c0" stroke-width="1.2"/></svg>
<svg class="a" style="left:782px;top:53px" width="33" height="33" viewBox="0 0 33 33"><defs><linearGradient id="bz" x1="0" x2="1"><stop offset="0" stop-color="#9fb6d2"/><stop offset="0.5" stop-color="#c4d4e6"/><stop offset="1" stop-color="#6f8db2"/></linearGradient><linearGradient id="rs" x1="0" x2="1"><stop offset="0" stop-color="#6a7c96"/><stop offset="1" stop-color="#2a3442"/></linearGradient></defs><path d="M1.5 6.5 L27.5 2 L31.5 3.5 V30 L27 30.5 V31 H2 L1 30 Z" fill="#3c4a5c"/><path d="M2.8 7.4 L27.4 3.2 V25 L2.6 25.6Z" fill="#fdfdfd"/><path d="M28.2 3.2 L30.8 4.2 V29.4 L28.2 29.8Z" fill="url(#rs)"/><path d="M2.4 25.8 H28 V29.6 H2.4Z" fill="url(#bz)"/><rect x="3.5" y="26.8" width="3" height="1.2" fill="#55657a"/><rect x="22" y="26.8" width="3.5" height="1.2" fill="#55657a"/><path d="M11 30 H21 V31 H11Z" fill="#2a3038"/><path d="M8.5 31 H26 L27.5 32.6 H7.5Z" fill="#3a424c"/><path d="M7 10 L13 14 L18 11 L24 11" fill="none" stroke="#7070e0" stroke-width="0.8"/></svg>
<div class="a" style="left:820px;top:53px;width:1px;height:32px;background:#c5ccd5"></div>
<div class="a" style="left:821px;top:53px;width:1px;height:32px;background:#fff"></div>
<svg class="a" style="left:827px;top:53px" width="33" height="33" viewBox="0 0 33 33"><defs><linearGradient id="bz" x1="0" x2="1"><stop offset="0" stop-color="#9fb6d2"/><stop offset="0.5" stop-color="#c4d4e6"/><stop offset="1" stop-color="#6f8db2"/></linearGradient><linearGradient id="rs" x1="0" x2="1"><stop offset="0" stop-color="#6a7c96"/><stop offset="1" stop-color="#2a3442"/></linearGradient></defs><path d="M1.5 6.5 L27.5 2 L31.5 3.5 V30 L27 30.5 V31 H2 L1 30 Z" fill="#3c4a5c"/><path d="M2.8 7.4 L27.4 3.2 V25 L2.6 25.6Z" fill="#fdfdfd"/><path d="M28.2 3.2 L30.8 4.2 V29.4 L28.2 29.8Z" fill="url(#rs)"/><path d="M2.4 25.8 H28 V29.6 H2.4Z" fill="url(#bz)"/><rect x="3.5" y="26.8" width="3" height="1.2" fill="#55657a"/><rect x="22" y="26.8" width="3.5" height="1.2" fill="#55657a"/><path d="M11 30 H21 V31 H11Z" fill="#2a3038"/><path d="M8.5 31 H26 L27.5 32.6 H7.5Z" fill="#3a424c"/><path d="M14 17 L13 5 L23 15 Z" fill="#30c060"/><path d="M14 17 L13 5 L17 9Z" fill="#40d0f0"/><path d="M14 17 L23 15 L19 11Z" fill="#f03050"/></svg>
<div class="a" style="left:865px;top:53px;width:1px;height:32px;background:#c5ccd5"></div>
<div class="a" style="left:866px;top:53px;width:1px;height:32px;background:#fff"></div>
<svg class="a" style="left:871px;top:53px" width="33" height="33" viewBox="0 0 33 33"><defs><linearGradient id="bz" x1="0" x2="1"><stop offset="0" stop-color="#9fb6d2"/><stop offset="0.5" stop-color="#c4d4e6"/><stop offset="1" stop-color="#6f8db2"/></linearGradient><linearGradient id="rs" x1="0" x2="1"><stop offset="0" stop-color="#6a7c96"/><stop offset="1" stop-color="#2a3442"/></linearGradient></defs><path d="M1.5 6.5 L27.5 2 L31.5 3.5 V30 L27 30.5 V31 H2 L1 30 Z" fill="#3c4a5c"/><path d="M2.8 7.4 L27.4 3.2 V25 L2.6 25.6Z" fill="#fdfdfd"/><path d="M28.2 3.2 L30.8 4.2 V29.4 L28.2 29.8Z" fill="url(#rs)"/><path d="M2.4 25.8 H28 V29.6 H2.4Z" fill="url(#bz)"/><rect x="3.5" y="26.8" width="3" height="1.2" fill="#55657a"/><rect x="22" y="26.8" width="3.5" height="1.2" fill="#55657a"/><path d="M11 30 H21 V31 H11Z" fill="#2a3038"/><path d="M8.5 31 H26 L27.5 32.6 H7.5Z" fill="#3a424c"/><path d="M7 18 L24 15" stroke="#d0c000" stroke-width="1.2"/></svg>
<svg class="a" style="left:910px;top:53px" width="33" height="33" viewBox="0 0 33 33"><defs><linearGradient id="bz" x1="0" x2="1"><stop offset="0" stop-color="#9fb6d2"/><stop offset="0.5" stop-color="#c4d4e6"/><stop offset="1" stop-color="#6f8db2"/></linearGradient><linearGradient id="rs" x1="0" x2="1"><stop offset="0" stop-color="#6a7c96"/><stop offset="1" stop-color="#2a3442"/></linearGradient></defs><path d="M1.5 6.5 L27.5 2 L31.5 3.5 V30 L27 30.5 V31 H2 L1 30 Z" fill="#3c4a5c"/><path d="M2.8 7.4 L27.4 3.2 V25 L2.6 25.6Z" fill="#fdfdfd"/><path d="M28.2 3.2 L30.8 4.2 V29.4 L28.2 29.8Z" fill="url(#rs)"/><path d="M2.4 25.8 H28 V29.6 H2.4Z" fill="url(#bz)"/><rect x="3.5" y="26.8" width="3" height="1.2" fill="#55657a"/><rect x="22" y="26.8" width="3.5" height="1.2" fill="#55657a"/><path d="M11 30 H21 V31 H11Z" fill="#2a3038"/><path d="M8.5 31 H26 L27.5 32.6 H7.5Z" fill="#3a424c"/><path d="M7 13 L24 8" stroke="#d0c000" stroke-width="1.2"/></svg>
<div class="a" style="left:949px;top:53px;width:1px;height:32px;background:#c5ccd5"></div>
<div class="a" style="left:950px;top:53px;width:1px;height:32px;background:#fff"></div>
<svg class="a" style="left:956px;top:53px" width="33" height="33" viewBox="0 0 33 33"><defs><linearGradient id="bz" x1="0" x2="1"><stop offset="0" stop-color="#9fb6d2"/><stop offset="0.5" stop-color="#c4d4e6"/><stop offset="1" stop-color="#6f8db2"/></linearGradient><linearGradient id="rs" x1="0" x2="1"><stop offset="0" stop-color="#6a7c96"/><stop offset="1" stop-color="#2a3442"/></linearGradient></defs><path d="M1.5 6.5 L27.5 2 L31.5 3.5 V30 L27 30.5 V31 H2 L1 30 Z" fill="#3c4a5c"/><path d="M2.8 7.4 L27.4 3.2 V25 L2.6 25.6Z" fill="#fdfdfd"/><path d="M28.2 3.2 L30.8 4.2 V29.4 L28.2 29.8Z" fill="url(#rs)"/><path d="M2.4 25.8 H28 V29.6 H2.4Z" fill="url(#bz)"/><rect x="3.5" y="26.8" width="3" height="1.2" fill="#55657a"/><rect x="22" y="26.8" width="3.5" height="1.2" fill="#55657a"/><path d="M11 30 H21 V31 H11Z" fill="#2a3038"/><path d="M8.5 31 H26 L27.5 32.6 H7.5Z" fill="#3a424c"/><path d="M6 10 L26 6" stroke="#e8e000" stroke-width="1"/><path d="M6 12.5 L26 8.5" stroke="#00e8f0" stroke-width="1"/><path d="M6 15 L26 11" stroke="#20e020" stroke-width="1"/><path d="M6 18 L26 14" stroke="#f020f0" stroke-width="1"/><path d="M6 20 L26 16" stroke="#f02020" stroke-width="1"/><path d="M6 22 L26 18" stroke="#2020f0" stroke-width="1"/></svg>
<svg class="a" style="left:995px;top:53px" width="33" height="33" viewBox="0 0 33 33"><defs><linearGradient id="bz" x1="0" x2="1"><stop offset="0" stop-color="#9fb6d2"/><stop offset="0.5" stop-color="#c4d4e6"/><stop offset="1" stop-color="#6f8db2"/></linearGradient><linearGradient id="rs" x1="0" x2="1"><stop offset="0" stop-color="#6a7c96"/><stop offset="1" stop-color="#2a3442"/></linearGradient></defs><path d="M1.5 6.5 L27.5 2 L31.5 3.5 V30 L27 30.5 V31 H2 L1 30 Z" fill="#3c4a5c"/><path d="M2.8 7.4 L27.4 3.2 V25 L2.6 25.6Z" fill="#fdfdfd"/><path d="M28.2 3.2 L30.8 4.2 V29.4 L28.2 29.8Z" fill="url(#rs)"/><path d="M2.4 25.8 H28 V29.6 H2.4Z" fill="url(#bz)"/><rect x="3.5" y="26.8" width="3" height="1.2" fill="#55657a"/><rect x="22" y="26.8" width="3.5" height="1.2" fill="#55657a"/><path d="M11 30 H21 V31 H11Z" fill="#2a3038"/><path d="M8.5 31 H26 L27.5 32.6 H7.5Z" fill="#3a424c"/><path d="M6 13 L10 11 L14 11 L18 9 L22 10 L26 8" stroke="#f02020" stroke-width="1.4" fill="none"/><path d="M8 12 L14 10 L20 9 L26 9" stroke="#2020f0" stroke-width="1" fill="none"/><path d="M12 11 L16 10" stroke="#20c020" stroke-width="1.4"/><path d="M6 20 L10 18 L13 16 L16 19 L20 16 L24 18" stroke="#f020f0" stroke-width="1.2" fill="none"/></svg>
<div class="a" style="left:1034px;top:53px;width:1px;height:32px;background:#c5ccd5"></div>
<div class="a" style="left:1035px;top:53px;width:1px;height:32px;background:#fff"></div>
<svg class="a" style="left:1040px;top:53px" width="33" height="33" viewBox="0 0 33 33"><defs><linearGradient id="bz" x1="0" x2="1"><stop offset="0" stop-color="#9fb6d2"/><stop offset="0.5" stop-color="#c4d4e6"/><stop offset="1" stop-color="#6f8db2"/></linearGradient><linearGradient id="rs" x1="0" x2="1"><stop offset="0" stop-color="#6a7c96"/><stop offset="1" stop-color="#2a3442"/></linearGradient></defs><path d="M1.5 6.5 L27.5 2 L31.5 3.5 V30 L27 30.5 V31 H2 L1 30 Z" fill="#3c4a5c"/><path d="M2.8 7.4 L27.4 3.2 V25 L2.6 25.6Z" fill="#fdfdfd"/><path d="M28.2 3.2 L30.8 4.2 V29.4 L28.2 29.8Z" fill="url(#rs)"/><path d="M2.4 25.8 H28 V29.6 H2.4Z" fill="url(#bz)"/><rect x="3.5" y="26.8" width="3" height="1.2" fill="#55657a"/><rect x="22" y="26.8" width="3.5" height="1.2" fill="#55657a"/><path d="M11 30 H21 V31 H11Z" fill="#2a3038"/><path d="M8.5 31 H26 L27.5 32.6 H7.5Z" fill="#3a424c"/><path d="M2.8 7.4 L27.4 3.2 V25 L2.6 25.6Z" fill="#181818"/><path d="M5 11 L26 7" stroke="#e0e000" stroke-width="1"/><path d="M5 14 L10 13 L14 14 L19 12 L26 11" stroke="#f08000" stroke-width="1" fill="none"/><path d="M5 16 L12 15 L18 15 L26 13" stroke="#20c020" stroke-width="1" fill="none"/><path d="M5 19 L26 16" stroke="#f020f0" stroke-width="1"/><path d="M5 21.5 L26 18.5" stroke="#8040f0" stroke-width="1"/></svg>
<svg class="a" style="left:1093px;top:53px;" width="33" height="33" viewBox="0 0 33 33"><path d="M2 2 H10 Q14 9 13 25.5 H2Z" fill="#c8c8c8" stroke="#000" stroke-width="0.9"/><path d="M3 5 H7 M3 11.5 H7 M3 18 H7" stroke="#fff" stroke-width="1.6"/><path d="M5 7.5 Q9 7.5 9 9.5 Q9 11 6 11 M5 14 Q9 14 9 16 Q9 17.5 6 17.5" fill="none" stroke="#505050" stroke-width="0.8"/><path d="M1.3 1 V26.5" stroke="#000" stroke-width="2.4" stroke-dasharray="1.1 0.9"/><path d="M21 10 L26 14 H30 V31.5 H23 Q20 22 21 10Z" fill="#c8c8c8" stroke="#000" stroke-width="0.9"/><path d="M27 17 Q23 17 23 19.5 Q23 22 27 22" fill="none" stroke="#505050" stroke-width="0.8"/><path d="M30.8 8 V32" stroke="#000" stroke-width="2.4" stroke-dasharray="1.1 0.9"/><path d="M2.5 1.5 Q12 0.5 19 1 Q22 5 22 10 L12 13 Q10.5 6 2.5 1.5Z" fill="#404050" stroke="#000" stroke-width="1.3"/><path d="M12 13 L22 10 Q22.3 16 23.5 19.8 L13 23 Q12.2 18 12 13Z" fill="#303040" stroke="#000" stroke-width="1.3"/><path d="M13 23 L23.5 19.8 Q26 23 31 24 L24.5 31.5 H18.5 Q14 28 13 23Z" fill="#505060" stroke="#000" stroke-width="1.3"/></svg>
<svg class="a" style="left:1133px;top:53px;" width="33" height="33" viewBox="0 0 33 33"><path d="M2 2 H10 Q14 9 13 25.5 H2Z" fill="#c8c8c8" stroke="#000" stroke-width="0.9"/><path d="M3 5 H7 M3 11.5 H7 M3 18 H7" stroke="#fff" stroke-width="1.6"/><path d="M5 7.5 Q9 7.5 9 9.5 Q9 11 6 11 M5 14 Q9 14 9 16 Q9 17.5 6 17.5" fill="none" stroke="#505050" stroke-width="0.8"/><path d="M1.3 1 V26.5" stroke="#000" stroke-width="2.4" stroke-dasharray="1.1 0.9"/><path d="M21 10 L26 14 H30 V31.5 H23 Q20 22 21 10Z" fill="#c8c8c8" stroke="#000" stroke-width="0.9"/><path d="M27 17 Q23 17 23 19.5 Q23 22 27 22" fill="none" stroke="#505050" stroke-width="0.8"/><path d="M30.8 8 V32" stroke="#000" stroke-width="2.4" stroke-dasharray="1.1 0.9"/><path d="M2.5 1.5 Q12 0.5 19 1 Q22 5 22 10 L12 13 Q10.5 6 2.5 1.5Z" fill="#f0f0f0" stroke="#000" stroke-width="1.3"/><path d="M12 13 L22 10 Q22.3 16 23.5 19.8 L13 23 Q12.2 18 12 13Z" fill="#e8e8e8" stroke="#000" stroke-width="1.3"/><path d="M13 23 L23.5 19.8 Q26 23 31 24 L24.5 31.5 H18.5 Q14 28 13 23Z" fill="#f8f8f8" stroke="#000" stroke-width="1.3"/></svg>
<div class="a" style="left:1170px;top:53px;width:1px;height:32px;background:#c5ccd5"></div>
<div class="a" style="left:1171px;top:53px;width:1px;height:32px;background:#fff"></div>
<svg class="a" style="left:1177px;top:53px;" width="33" height="33" viewBox="0 0 33 33"><path d="M2 2 H10 Q14 9 13 25.5 H2Z" fill="#c8c8c8" stroke="#000" stroke-width="0.9"/><path d="M3 5 H7 M3 11.5 H7 M3 18 H7" stroke="#fff" stroke-width="1.6"/><path d="M5 7.5 Q9 7.5 9 9.5 Q9 11 6 11 M5 14 Q9 14 9 16 Q9 17.5 6 17.5" fill="none" stroke="#505050" stroke-width="0.8"/><path d="M1.3 1 V26.5" stroke="#000" stroke-width="2.4" stroke-dasharray="1.1 0.9"/><path d="M21 10 L26 14 H30 V31.5 H23 Q20 22 21 10Z" fill="#c8c8c8" stroke="#000" stroke-width="0.9"/><path d="M27 17 Q23 17 23 19.5 Q23 22 27 22" fill="none" stroke="#505050" stroke-width="0.8"/><path d="M30.8 8 V32" stroke="#000" stroke-width="2.4" stroke-dasharray="1.1 0.9"/><path d="M2.5 1.5 Q12 0.5 19 1 Q22 5 22 10 L12 13 Q10.5 6 2.5 1.5Z" fill="#e01010" stroke="#000" stroke-width="1.3"/><path d="M12 13 L22 10 Q22.3 16 23.5 19.8 L13 23 Q12.2 18 12 13Z" fill="#20c020" stroke="#000" stroke-width="1.3"/><path d="M13 23 L23.5 19.8 Q26 23 31 24 L24.5 31.5 H18.5 Q14 28 13 23Z" fill="#2060f0" stroke="#000" stroke-width="1.3"/></svg>
<svg class="a" style="left:1217px;top:53px;" width="33" height="33" viewBox="0 0 33 33"><path d="M2 2 H10 Q14 9 13 25.5 H2Z" fill="#c8c8c8" stroke="#000" stroke-width="0.9"/><path d="M3 5 H7 M3 11.5 H7 M3 18 H7" stroke="#fff" stroke-width="1.6"/><path d="M5 7.5 Q9 7.5 9 9.5 Q9 11 6 11 M5 14 Q9 14 9 16 Q9 17.5 6 17.5" fill="none" stroke="#505050" stroke-width="0.8"/><path d="M1.3 1 V26.5" stroke="#000" stroke-width="2.4" stroke-dasharray="1.1 0.9"/><path d="M21 10 L26 14 H30 V31.5 H23 Q20 22 21 10Z" fill="#c8c8c8" stroke="#000" stroke-width="0.9"/><path d="M27 17 Q23 17 23 19.5 Q23 22 27 22" fill="none" stroke="#505050" stroke-width="0.8"/><path d="M30.8 8 V32" stroke="#000" stroke-width="2.4" stroke-dasharray="1.1 0.9"/><path d="M2.5 1.5 Q12 0.5 19 1 Q22 5 22 10 L12 13 Q10.5 6 2.5 1.5Z" fill="#e01010" stroke="#000" stroke-width="1.3"/><path d="M12 13 L22 10 Q22.3 16 23.5 19.8 L13 23 Q12.2 18 12 13Z" fill="#20c020" stroke="#000" stroke-width="1.3"/><path d="M13 23 L23.5 19.8 Q26 23 31 24 L24.5 31.5 H18.5 Q14 28 13 23Z" fill="#2060f0" stroke="#000" stroke-width="1.3"/></svg>
<svg class="a" style="left:1256px;top:53px" width="32" height="32" viewBox="0 0 32 32"><defs><radialGradient id="pg"><stop offset="0" stop-color="#ffe8ff"/><stop offset="0.2" stop-color="#e0a0ff"/><stop offset="0.45" stop-color="#8030d0"/><stop offset="1" stop-color="#180830"/></radialGradient></defs><rect width="32" height="32" fill="url(#pg)"/><path d="M16 16 L2 3 M16 16 L30 4 M16 16 L3 29 M16 16 L29 30 M16 16 L16 0 M16 16 L0 17 M16 16 L32 15 M16 16 L17 32" stroke="#c080ff" stroke-width="0.6" opacity="0.7"/><ellipse cx="16" cy="16" rx="4" ry="5" fill="#f0c0ff" stroke="#fff" stroke-width="1.2"/></svg>
<svg class="a" style="left:1310px;top:53px;" width="33" height="33" viewBox="0 0 33 33"><path d="M2 2 H10 Q14 9 13 25.5 H2Z" fill="#c8c8c8" stroke="#000" stroke-width="0.9"/><path d="M3 5 H7 M3 11.5 H7 M3 18 H7" stroke="#fff" stroke-width="1.6"/><path d="M5 7.5 Q9 7.5 9 9.5 Q9 11 6 11 M5 14 Q9 14 9 16 Q9 17.5 6 17.5" fill="none" stroke="#505050" stroke-width="0.8"/><path d="M1.3 1 V26.5" stroke="#000" stroke-width="2.4" stroke-dasharray="1.1 0.9"/><path d="M21 10 L26 14 H30 V31.5 H23 Q20 22 21 10Z" fill="#c8c8c8" stroke="#000" stroke-width="0.9"/><path d="M27 17 Q23 17 23 19.5 Q23 22 27 22" fill="none" stroke="#505050" stroke-width="0.8"/><path d="M30.8 8 V32" stroke="#000" stroke-width="2.4" stroke-dasharray="1.1 0.9"/><path d="M2.5 1.5 Q12 0.5 19 1 Q22 5 22 10 L12 13 Q10.5 6 2.5 1.5Z" fill="#f01010" stroke="#000" stroke-width="1.3"/><path d="M12 13 L22 10 Q22.3 16 23.5 19.8 L13 23 Q12.2 18 12 13Z" fill="#e01010" stroke="#000" stroke-width="1.3"/><path d="M13 23 L23.5 19.8 Q26 23 31 24 L24.5 31.5 H18.5 Q14 28 13 23Z" fill="#d01010" stroke="#000" stroke-width="1.3"/></svg>
<svg class="a" style="left:1349px;top:53px;" width="33" height="33" viewBox="0 0 33 33"><path d="M2 2 H10 Q14 9 13 25.5 H2Z" fill="#c8c8c8" stroke="#000" stroke-width="0.9"/><path d="M3 5 H7 M3 11.5 H7 M3 18 H7" stroke="#fff" stroke-width="1.6"/><path d="M5 7.5 Q9 7.5 9 9.5 Q9 11 6 11 M5 14 Q9 14 9 16 Q9 17.5 6 17.5" fill="none" stroke="#505050" stroke-width="0.8"/><path d="M1.3 1 V26.5" stroke="#000" stroke-width="2.4" stroke-dasharray="1.1 0.9"/><path d="M21 10 L26 14 H30 V31.5 H23 Q20 22 21 10Z" fill="#c8c8c8" stroke="#000" stroke-width="0.9"/><path d="M27 17 Q23 17 23 19.5 Q23 22 27 22" fill="none" stroke="#505050" stroke-width="0.8"/><path d="M30.8 8 V32" stroke="#000" stroke-width="2.4" stroke-dasharray="1.1 0.9"/><path d="M2.5 1.5 Q12 0.5 19 1 Q22 5 22 10 L12 13 Q10.5 6 2.5 1.5Z" fill="#20d020" stroke="#000" stroke-width="1.3"/><path d="M12 13 L22 10 Q22.3 16 23.5 19.8 L13 23 Q12.2 18 12 13Z" fill="#10c010" stroke="#000" stroke-width="1.3"/><path d="M13 23 L23.5 19.8 Q26 23 31 24 L24.5 31.5 H18.5 Q14 28 13 23Z" fill="#10b010" stroke="#000" stroke-width="1.3"/></svg>
<svg class="a" style="left:1388px;top:53px;" width="33" height="33" viewBox="0 0 33 33"><path d="M2 2 H10 Q14 9 13 25.5 H2Z" fill="#c8c8c8" stroke="#000" stroke-width="0.9"/><path d="M3 5 H7 M3 11.5 H7 M3 18 H7" stroke="#fff" stroke-width="1.6"/><path d="M5 7.5 Q9 7.5 9 9.5 Q9 11 6 11 M5 14 Q9 14 9 16 Q9 17.5 6 17.5" fill="none" stroke="#505050" stroke-width="0.8"/><path d="M1.3 1 V26.5" stroke="#000" stroke-width="2.4" stroke-dasharray="1.1 0.9"/><path d="M21 10 L26 14 H30 V31.5 H23 Q20 22 21 10Z" fill="#c8c8c8" stroke="#000" stroke-width="0.9"/><path d="M27 17 Q23 17 23 19.5 Q23 22 27 22" fill="none" stroke="#505050" stroke-width="0.8"/><path d="M30.8 8 V32" stroke="#000" stroke-width="2.4" stroke-dasharray="1.1 0.9"/><path d="M2.5 1.5 Q12 0.5 19 1 Q22 5 22 10 L12 13 Q10.5 6 2.5 1.5Z" fill="#2050f0" stroke="#000" stroke-width="1.3"/><path d="M12 13 L22 10 Q22.3 16 23.5 19.8 L13 23 Q12.2 18 12 13Z" fill="#1040e0" stroke="#000" stroke-width="1.3"/><path d="M13 23 L23.5 19.8 Q26 23 31 24 L24.5 31.5 H18.5 Q14 28 13 23Z" fill="#1030d0" stroke="#000" stroke-width="1.3"/></svg>
<svg class="a" style="left:1427px;top:53px;" width="33" height="33" viewBox="0 0 33 33"><path d="M2 2 H10 Q14 9 13 25.5 H2Z" fill="#c8c8c8" stroke="#000" stroke-width="0.9"/><path d="M3 5 H7 M3 11.5 H7 M3 18 H7" stroke="#fff" stroke-width="1.6"/><path d="M5 7.5 Q9 7.5 9 9.5 Q9 11 6 11 M5 14 Q9 14 9 16 Q9 17.5 6 17.5" fill="none" stroke="#505050" stroke-width="0.8"/><path d="M1.3 1 V26.5" stroke="#000" stroke-width="2.4" stroke-dasharray="1.1 0.9"/><path d="M21 10 L26 14 H30 V31.5 H23 Q20 22 21 10Z" fill="#c8c8c8" stroke="#000" stroke-width="0.9"/><path d="M27 17 Q23 17 23 19.5 Q23 22 27 22" fill="none" stroke="#505050" stroke-width="0.8"/><path d="M30.8 8 V32" stroke="#000" stroke-width="2.4" stroke-dasharray="1.1 0.9"/><path d="M2.5 1.5 Q12 0.5 19 1 Q22 5 22 10 L12 13 Q10.5 6 2.5 1.5Z" fill="#f0f040" stroke="#000" stroke-width="1.3"/><path d="M12 13 L22 10 Q22.3 16 23.5 19.8 L13 23 Q12.2 18 12 13Z" fill="#e8e830" stroke="#000" stroke-width="1.3"/><path d="M13 23 L23.5 19.8 Q26 23 31 24 L24.5 31.5 H18.5 Q14 28 13 23Z" fill="#e0e020" stroke="#000" stroke-width="1.3"/></svg>
<svg class="a" style="left:1466px;top:53px;" width="33" height="33" viewBox="0 0 33 33"><path d="M2 2 H10 Q14 9 13 25.5 H2Z" fill="#c8c8c8" stroke="#000" stroke-width="0.9"/><path d="M3 5 H7 M3 11.5 H7 M3 18 H7" stroke="#fff" stroke-width="1.6"/><path d="M5 7.5 Q9 7.5 9 9.5 Q9 11 6 11 M5 14 Q9 14 9 16 Q9 17.5 6 17.5" fill="none" stroke="#505050" stroke-width="0.8"/><path d="M1.3 1 V26.5" stroke="#000" stroke-width="2.4" stroke-dasharray="1.1 0.9"/><path d="M21 10 L26 14 H30 V31.5 H23 Q20 22 21 10Z" fill="#c8c8c8" stroke="#000" stroke-width="0.9"/><path d="M27 17 Q23 17 23 19.5 Q23 22 27 22" fill="none" stroke="#505050" stroke-width="0.8"/><path d="M30.8 8 V32" stroke="#000" stroke-width="2.4" stroke-dasharray="1.1 0.9"/><path d="M2.5 1.5 Q12 0.5 19 1 Q22 5 22 10 L12 13 Q10.5 6 2.5 1.5Z" fill="#30e0f0" stroke="#000" stroke-width="1.3"/><path d="M12 13 L22 10 Q22.3 16 23.5 19.8 L13 23 Q12.2 18 12 13Z" fill="#20d0e0" stroke="#000" stroke-width="1.3"/><path d="M13 23 L23.5 19.8 Q26 23 31 24 L24.5 31.5 H18.5 Q14 28 13 23Z" fill="#10c0d0" stroke="#000" stroke-width="1.3"/></svg>
<svg class="a" style="left:1505px;top:53px;" width="33" height="33" viewBox="0 0 33 33"><path d="M2 2 H10 Q14 9 13 25.5 H2Z" fill="#c8c8c8" stroke="#000" stroke-width="0.9"/><path d="M3 5 H7 M3 11.5 H7 M3 18 H7" stroke="#fff" stroke-width="1.6"/><path d="M5 7.5 Q9 7.5 9 9.5 Q9 11 6 11 M5 14 Q9 14 9 16 Q9 17.5 6 17.5" fill="none" stroke="#505050" stroke-width="0.8"/><path d="M1.3 1 V26.5" stroke="#000" stroke-width="2.4" stroke-dasharray="1.1 0.9"/><path d="M21 10 L26 14 H30 V31.5 H23 Q20 22 21 10Z" fill="#c8c8c8" stroke="#000" stroke-width="0.9"/><path d="M27 17 Q23 17 23 19.5 Q23 22 27 22" fill="none" stroke="#505050" stroke-width="0.8"/><path d="M30.8 8 V32" stroke="#000" stroke-width="2.4" stroke-dasharray="1.1 0.9"/><path d="M2.5 1.5 Q12 0.5 19 1 Q22 5 22 10 L12 13 Q10.5 6 2.5 1.5Z" fill="#b020e0" stroke="#000" stroke-width="1.3"/><path d="M12 13 L22 10 Q22.3 16 23.5 19.8 L13 23 Q12.2 18 12 13Z" fill="#a010d0" stroke="#000" stroke-width="1.3"/><path d="M13 23 L23.5 19.8 Q26 23 31 24 L24.5 31.5 H18.5 Q14 28 13 23Z" fill="#9010c0" stroke="#000" stroke-width="1.3"/></svg>
<svg class="a" style="left:1544px;top:53px;" width="33" height="33" viewBox="0 0 33 33"><path d="M2 2 H10 Q14 9 13 25.5 H2Z" fill="#c8c8c8" stroke="#000" stroke-width="0.9"/><path d="M3 5 H7 M3 11.5 H7 M3 18 H7" stroke="#fff" stroke-width="1.6"/><path d="M5 7.5 Q9 7.5 9 9.5 Q9 11 6 11 M5 14 Q9 14 9 16 Q9 17.5 6 17.5" fill="none" stroke="#505050" stroke-width="0.8"/><path d="M1.3 1 V26.5" stroke="#000" stroke-width="2.4" stroke-dasharray="1.1 0.9"/><path d="M21 10 L26 14 H30 V31.5 H23 Q20 22 21 10Z" fill="#c8c8c8" stroke="#000" stroke-width="0.9"/><path d="M27 17 Q23 17 23 19.5 Q23 22 27 22" fill="none" stroke="#505050" stroke-width="0.8"/><path d="M30.8 8 V32" stroke="#000" stroke-width="2.4" stroke-dasharray="1.1 0.9"/><path d="M2.5 1.5 Q12 0.5 19 1 Q22 5 22 10 L12 13 Q10.5 6 2.5 1.5Z" fill="#e01010" stroke="#000" stroke-width="1.3"/><path d="M12 13 L22 10 Q22.3 16 23.5 19.8 L13 23 Q12.2 18 12 13Z" fill="#20c020" stroke="#000" stroke-width="1.3"/><path d="M13 23 L23.5 19.8 Q26 23 31 24 L24.5 31.5 H18.5 Q14 28 13 23Z" fill="#2060f0" stroke="#000" stroke-width="1.3"/></svg>
<div class="a" style="left:0px;top:89px;width:1920px;height:953px;background:#f0f0f0"></div>
<div class="a" style="left:0px;top:89px;width:1920px;height:2px;background:#a0a0a0"></div>
<div class="a" style="left:0px;top:91px;width:1900px;height:2px;background:#6e6e6e"></div>
<div class="a" style="left:0px;top:89px;width:1px;height:953px;background:#a0a0a0"></div>
<div class="a" style="left:1px;top:91px;width:1px;height:929px;background:#6e6e6e"></div>
<div class="a" style="left:2px;top:93px;width:1896px;height:927px;background:#7a7a7a"></div>
<div class="a" style="left:1896px;top:91px;width:4px;height:931px;background:#6e6e6e"></div>
<div class="a" style="left:2px;top:93px;width:1894px;height:62px;background:#fff"></div>
<div class="a" style="left:2px;top:159px;width:1809px;height:221px;background:#fff"></div>
<div class="a" style="left:1813px;top:159px;width:83px;height:221px;background:#fff"></div>
<div class="a" style="left:2px;top:384px;width:383px;height:636px;background:#fff"></div>
<div class="a" style="left:388px;top:384px;width:1508px;height:636px;background:#fff"></div>
<div class="a" style="left:1307px;top:93px;width:1px;height:62px;background:#c8c8c8"></div>
<div class="a" style="left:1618px;top:93px;width:1px;height:62px;background:#c8c8c8"></div>
<div class="a" style="left:1742px;top:93px;width:1px;height:62px;background:#c8c8c8"></div>
<div class="a" style="left:2px;top:155px;width:1894px;height:1px;background:#b8b8b8"></div>
<div class="a" style="left:2px;top:1019px;width:1896px;height:3px;background:#a8a8a8"></div>
<div class="a" style="left:2px;top:1019px;width:1896px;height:1px;background:#6e6e6e"></div>
<div class="a" style="left:1900px;top:93px;width:20px;height:929px;background:#f0f0f0"></div>
<div class="a" style="left:1909px;top:109px;width:2px;height:869px;background:#808080"></div>
<div class="a" style="left:0px;top:1022px;width:1920px;height:20px;background:#f0f0f0"></div>
<div class="a" style="left:19px;top:1030px;width:1825px;height:2px;background:#808080"></div>
<div class="a" style="left:0px;top:1041px;width:1920px;height:1px;background:#000"></div>
<div class="a" style="left:5px;top:97px;width:1300px;height:57px;background:#707070"></div>
<div class="a" style="left:6px;top:98px;width:1297px;height:54px;background:#ebebeb"></div>
<div class="a" style="left:6px;top:98px;width:1297px;height:17px;background:linear-gradient(90deg,#e3eaf5,#edf2f9);border-radius:5px 5px 0 0"></div>
<div class="a" style="left:6px;top:115px;width:1297px;height:1px;background:#8a8a8a"></div>
<div class="a t" style="left:12.40px;top:100.86px;font-size:12.3px;color:#3a3a3a;font-weight:bold;letter-spacing:0.522px;">View</div>
<div class="a" style="left:1311px;top:97px;width:306px;height:57px;background:#707070"></div>
<div class="a" style="left:1312px;top:98px;width:303px;height:54px;background:#ebebeb"></div>
<div class="a" style="left:1312px;top:98px;width:303px;height:17px;background:linear-gradient(90deg,#e3eaf5,#edf2f9);border-radius:5px 5px 0 0"></div>
<div class="a" style="left:1312px;top:115px;width:303px;height:1px;background:#8a8a8a"></div>
<div class="a t" style="left:1317.90px;top:100.86px;font-size:12.3px;color:#3a3a3a;font-weight:bold;letter-spacing:0.661px;">Sensor</div>
<div class="a" style="left:1621px;top:97px;width:120px;height:57px;background:#707070"></div>
<div class="a" style="left:1622px;top:98px;width:117px;height:54px;background:#ebebeb"></div>
<div class="a" style="left:1622px;top:98px;width:117px;height:17px;background:linear-gradient(90deg,#e3eaf5,#edf2f9);border-radius:5px 5px 0 0"></div>
<div class="a" style="left:1622px;top:115px;width:117px;height:1px;background:#8a8a8a"></div>
<div class="a t" style="left:1628.75px;top:100.86px;font-size:12.3px;color:#3a3a3a;font-weight:bold;letter-spacing:0.759px;">Generator</div>
<div class="a" style="left:1745px;top:97px;width:151px;height:57px;background:#707070"></div>
<div class="a" style="left:1746px;top:98px;width:148px;height:54px;background:#ebebeb"></div>
<div class="a" style="left:1746px;top:98px;width:148px;height:17px;background:linear-gradient(90deg,#e3eaf5,#edf2f9);border-radius:5px 5px 0 0"></div>
<div class="a" style="left:1746px;top:115px;width:148px;height:1px;background:#8a8a8a"></div>
<div class="a t" style="left:1752.70px;top:100.86px;font-size:12.3px;color:#3a3a3a;font-weight:bold;letter-spacing:0.899px;">Parameters</div>
<div class="a" style="left:9px;top:123px;width:200px;height:22px;background:#fff;border:1px solid #c8c8c8;border-top-color:#a0a0a0;border-left-color:#a0a0a0"></div>
<div class="a t" style="left:13.20px;top:128.01px;font-size:13px;color:#000;letter-spacing:0.515px;">Red saturation scale</div>
<svg class="a" style="left:195px;top:130px" width="10" height="6" viewBox="0 0 10 6"><path d="M0.5 0.5 L5 5 L9.5 0.5" fill="none" stroke="#404040" stroke-width="1"/></svg>
<div class="a" style="left:216px;top:118px;width:1057px;height:30px;background:#f0f0f0;border-top:1px solid #a0a0a0;border-left:1px solid #a0a0a0;border-bottom:1px solid #fff;border-right:1px solid #fff"></div>
<div class="a t" style="left:217.50px;top:119.51px;font-size:16px;color:#000;letter-spacing:0.379px;-webkit-text-stroke:0.4px #000;">Color Space: HDTV Rec709 , White Point: D65, EOTF:  SDR, Power law (black compensation) w/gamma = 2.20, # of measures: 0 [01:06:33]</div>
<div class="a" style="left:1278px;top:121px;width:16px;height:12px;background:#efefef;border:1px solid #c8c8c8"></div>
<div class="a" style="left:1278px;top:133px;width:16px;height:12px;background:#efefef;border:1px solid #c8c8c8"></div>
<svg class="a" style="left:1282px;top:124px" width="8" height="20" viewBox="0 0 8 20"><path d="M0.5 4.5 L4 1 L7.5 4.5Z M0.5 15 L4 18.5 L7.5 15Z" fill="#000"/></svg>
<div class="a" style="left:1313px;top:116px;width:295px;height:17px;background:#f0f0f0"></div>
<div class="a t" style="left:1316.30px;top:118.11px;font-size:12.8px;color:#000;letter-spacing:0.654px;">Simulated sensor</div>
<div class="a" style="left:1315px;top:133px;width:70px;height:17px;background:#f0f0f0"></div>
<div class="a t" style="left:1318.00px;top:135.11px;font-size:12.8px;color:#000;letter-spacing:0.740px;">Adaptive</div>
<svg class="a" style="left:1423px;top:135px" width="13" height="13" viewBox="0 0 13 13"><path d="M1 1 L12 6.5 L1 12Z" fill="#5ccc40" stroke="#40a030" stroke-width="0.8"/></svg>
<svg class="a" style="left:1588px;top:133px" width="20" height="18" viewBox="0 0 20 18"><rect x="1" y="2" width="12" height="15" rx="1" fill="#9fc4ec" stroke="#1a4c9a" stroke-width="1.4"/><rect x="3" y="4" width="8" height="10" fill="#e8f2fc"/><path d="M6 12 L16 5" stroke="#d03030" stroke-width="1.6"/><path d="M7 9 L9 12" stroke="#e0a020"/></svg>
<div class="a t" style="left:1624.40px;top:118.11px;font-size:12.8px;color:#000;letter-spacing:0.282px;">DVD manual</div>
<svg class="a" style="left:1718px;top:134px" width="20" height="18" viewBox="0 0 20 18"><rect x="1" y="2" width="12" height="15" rx="1" fill="#9fc4ec" stroke="#1a4c9a" stroke-width="1.4"/><rect x="3" y="4" width="8" height="10" fill="#e8f2fc"/><path d="M6 12 L16 5" stroke="#d03030" stroke-width="1.6"/><path d="M7 9 L9 12" stroke="#e0a020"/></svg>
<div class="a" style="left:1754px;top:119px;width:13px;height:13px;background:#f4f4f4;border:1px solid #333;border-radius:3px"></div>
<div class="a t" style="left:1771.70px;top:120.11px;font-size:12.8px;color:#000;letter-spacing:0.355px;">Reference</div>
<div class="a" style="left:1754px;top:136px;width:13px;height:13px;background:#f4f4f4;border:1px solid #c8c8c8;border-radius:3px"></div>
<div class="a t" style="left:1771.70px;top:137.11px;font-size:12.8px;color:#7a7a7a;letter-spacing:0.502px;">XYZ Adjustment</div>
<div class="a" style="left:5px;top:162px;width:1805px;height:217px;background:#707070"></div>
<div class="a" style="left:6px;top:163px;width:1802px;height:214px;background:#ebebeb"></div>
<div class="a" style="left:6px;top:163px;width:1802px;height:14px;background:linear-gradient(90deg,#e3eaf5,#edf2f9);border-radius:5px 5px 0 0"></div>
<div class="a" style="left:6px;top:169px;width:1px;height:208px;background:#00d000"></div>
<div class="a" style="left:6px;top:376px;width:1802px;height:1px;background:#00d000"></div>
<div class="a" style="left:1807px;top:166px;width:1px;height:211px;background:#00d000"></div>
<div class="a" style="left:1789px;top:179px;width:18px;height:1px;background:#00d000"></div>
<div class="a t" style="left:14.50px;top:165.51px;font-size:11px;color:#3a3a3a;font-weight:bold;">( Average dE: 1.07 [1.03,0.25,0.11] max: 1.93 [CIE2000] )</div>
<div class="a" style="left:9px;top:176px;width:1780px;height:180px;background:#f0f0f0"></div>
<div class="a" style="left:9px;top:176px;width:1780px;height:2px;background:#6a6a6a"></div>
<div class="a" style="left:9px;top:176px;width:2px;height:180px;background:#6a6a6a"></div>
<div class="a" style="left:11px;top:178px;width:53px;height:23px;background:#f0f0f0"></div>
<div class="a" style="left:65px;top:178px;width:340px;height:23px;background:#fff"></div>
<div class="a" style="left:66px;top:179px;width:339px;height:22px;background:#f0f0f0"></div>
<div class="a" style="left:406px;top:178px;width:341px;height:23px;background:#fff"></div>
<div class="a" style="left:407px;top:179px;width:340px;height:22px;background:#f0c0c0"></div>
<div class="a" style="left:748px;top:178px;width:341px;height:23px;background:#fff"></div>
<div class="a" style="left:749px;top:179px;width:340px;height:22px;background:#f09090"></div>
<div class="a" style="left:1090px;top:178px;width:340px;height:23px;background:#fff"></div>
<div class="a" style="left:1091px;top:179px;width:339px;height:22px;background:#f06060"></div>
<div class="a" style="left:1431px;top:178px;width:340px;height:23px;background:#fff"></div>
<div class="a" style="left:1432px;top:179px;width:339px;height:22px;background:#f03030"></div>
<div class="a" style="left:63px;top:178px;width:2px;height:176px;background:#6a6a6a"></div>
<div class="a" style="left:404px;top:178px;width:2px;height:176px;#c0c0c0"></div>
<div class="a" style="left:746px;top:178px;width:2px;height:176px;#c0c0c0"></div>
<div class="a" style="left:1088px;top:178px;width:2px;height:176px;#c0c0c0"></div>
<div class="a" style="left:1429px;top:178px;width:2px;height:176px;#c0c0c0"></div>
<div class="a" style="left:1770px;top:178px;width:2px;height:176px;#c0c0c0"></div>
<div class="a" style="left:64px;top:178px;width:1px;height:176px;background:#6a6a6a"></div>
<div class="a" style="left:63px;top:178px;width:1px;height:176px;background:#6a6a6a"></div>
<div class="a" style="left:65px;top:202px;width:1706px;height:23px;background:#fff"></div>
<div class="a" style="left:11px;top:202px;width:52px;height:23px;background:#f0f0f0"></div>
<div class="a" style="left:65px;top:226px;width:1706px;height:24px;background:#fff"></div>
<div class="a" style="left:11px;top:226px;width:52px;height:24px;background:#f0f0f0"></div>
<div class="a" style="left:65px;top:251px;width:1706px;height:24px;background:#fff"></div>
<div class="a" style="left:11px;top:251px;width:52px;height:24px;background:#f0f0f0"></div>
<div class="a" style="left:65px;top:276px;width:1706px;height:24px;background:#b0ffb0"></div>
<div class="a" style="left:11px;top:276px;width:52px;height:24px;background:#f0f0f0"></div>
<div class="a" style="left:65px;top:301px;width:1706px;height:24px;background:#f0f0f0"></div>
<div class="a" style="left:11px;top:301px;width:52px;height:24px;background:#f0f0f0"></div>
<div class="a" style="left:65px;top:326px;width:1706px;height:24px;background:#dedede"></div>
<div class="a" style="left:11px;top:326px;width:52px;height:24px;background:#f0f0f0"></div>
<div class="a" style="left:11px;top:201px;width:53px;height:1px;background:#6a6a6a"></div>
<div class="a" style="left:64px;top:201px;width:1707px;height:1px;#6a6a6a"></div>
<div class="a" style="left:11px;top:225px;width:53px;height:1px;background:#6a6a6a"></div>
<div class="a" style="left:64px;top:225px;width:1707px;height:1px;background:#c0c0c0"></div>
<div class="a" style="left:11px;top:250px;width:53px;height:1px;background:#6a6a6a"></div>
<div class="a" style="left:64px;top:250px;width:1707px;height:1px;background:#c0c0c0"></div>
<div class="a" style="left:11px;top:275px;width:53px;height:1px;background:#6a6a6a"></div>
<div class="a" style="left:64px;top:275px;width:1707px;height:1px;background:#c0c0c0"></div>
<div class="a" style="left:11px;top:300px;width:53px;height:1px;background:#6a6a6a"></div>
<div class="a" style="left:64px;top:300px;width:1707px;height:1px;background:#c0c0c0"></div>
<div class="a" style="left:11px;top:325px;width:53px;height:1px;background:#6a6a6a"></div>
<div class="a" style="left:64px;top:325px;width:1707px;height:1px;background:#c0c0c0"></div>
<div class="a" style="left:11px;top:350px;width:53px;height:1px;background:#6a6a6a"></div>
<div class="a" style="left:64px;top:350px;width:1707px;height:1px;background:#c0c0c0"></div>
<div class="a" style="left:64px;top:200px;width:1707px;height:2px;background:#6a6a6a"></div>
<div class="a" style="left:11px;top:200px;width:53px;height:2px;background:#6a6a6a"></div>
<div class="a" style="left:405px;top:178px;width:1px;height:23px;background:#6a6a6a"></div>
<div class="a" style="left:405px;top:202px;width:1px;height:152px;background:#c0c0c0"></div>
<div class="a" style="left:747px;top:178px;width:1px;height:23px;background:#6a6a6a"></div>
<div class="a" style="left:747px;top:202px;width:1px;height:152px;background:#c0c0c0"></div>
<div class="a" style="left:1089px;top:178px;width:1px;height:23px;background:#6a6a6a"></div>
<div class="a" style="left:1089px;top:202px;width:1px;height:152px;background:#c0c0c0"></div>
<div class="a" style="left:1430px;top:178px;width:1px;height:23px;background:#6a6a6a"></div>
<div class="a" style="left:1430px;top:202px;width:1px;height:152px;background:#c0c0c0"></div>
<div class="a" style="left:1771px;top:178px;width:1px;height:23px;background:#6a6a6a"></div>
<div class="a" style="left:1771px;top:202px;width:1px;height:152px;background:#c0c0c0"></div>
<div class="a" style="left:63px;top:178px;width:2px;height:176px;background:#6a6a6a"></div>
<div class="a t" style="left:22.30px;top:184.01px;font-size:12px;color:#000;font-weight:bold;letter-spacing:-0.544px;">% Sat</div>
<div class="a t" style="left:33.66px;top:208.01px;font-size:12px;color:#000;font-weight:bold;">x</div>
<div class="a t" style="left:33.66px;top:232.01px;font-size:12px;color:#000;font-weight:bold;">y</div>
<div class="a t" style="left:33.00px;top:257.01px;font-size:12px;color:#000;font-weight:bold;">Y</div>
<div class="a t" style="left:16.66px;top:282.01px;font-size:12px;color:#000;font-weight:bold;">Delta E</div>
<div class="a t" style="left:14.66px;top:307.01px;font-size:12px;color:#000;font-weight:bold;">delta xy</div>
<div class="a t" style="left:17.66px;top:332.01px;font-size:12px;color:#000;font-weight:bold;">delta L</div>
<div class="a t" style="left:231.16px;top:184.01px;font-size:12px;color:#000;font-weight:bold;">0</div>
<div class="a t" style="left:569.33px;top:184.01px;font-size:12px;color:#000;font-weight:bold;">25</div>
<div class="a t" style="left:911.33px;top:184.01px;font-size:12px;color:#000;font-weight:bold;">50</div>
<div class="a t" style="left:1252.83px;top:184.01px;font-size:12px;color:#000;font-weight:bold;">75</div>
<div class="a t" style="left:1590.49px;top:184.01px;font-size:12px;color:#000;font-weight:bold;">100</div>
<div class="a t" style="left:368.99px;top:208.01px;font-size:12px;color:#000;letter-spacing:-0.400px;">0.3128</div>
<div class="a t" style="left:710.99px;top:208.01px;font-size:12px;color:#000;letter-spacing:-0.400px;">0.3917</div>
<div class="a t" style="left:1052.99px;top:208.01px;font-size:12px;color:#000;letter-spacing:-0.400px;">0.4782</div>
<div class="a t" style="left:1393.99px;top:208.01px;font-size:12px;color:#000;letter-spacing:-0.400px;">0.5615</div>
<div class="a t" style="left:1734.99px;top:208.01px;font-size:12px;color:#000;letter-spacing:-0.400px;">0.6412</div>
<div class="a t" style="left:368.99px;top:233.01px;font-size:12px;color:#000;letter-spacing:-0.400px;">0.3292</div>
<div class="a t" style="left:710.99px;top:233.01px;font-size:12px;color:#000;letter-spacing:-0.400px;">0.3290</div>
<div class="a t" style="left:1052.99px;top:233.01px;font-size:12px;color:#000;letter-spacing:-0.400px;">0.3293</div>
<div class="a t" style="left:1393.99px;top:233.01px;font-size:12px;color:#000;letter-spacing:-0.400px;">0.3290</div>
<div class="a t" style="left:1734.99px;top:233.01px;font-size:12px;color:#000;letter-spacing:-0.400px;">0.3284</div>
<div class="a t" style="left:368.99px;top:258.01px;font-size:12px;color:#000;letter-spacing:-0.400px;">42.824</div>
<div class="a t" style="left:710.99px;top:258.01px;font-size:12px;color:#000;letter-spacing:-0.400px;">41.420</div>
<div class="a t" style="left:1052.99px;top:258.01px;font-size:12px;color:#000;letter-spacing:-0.400px;">41.284</div>
<div class="a t" style="left:1393.99px;top:258.01px;font-size:12px;color:#000;letter-spacing:-0.400px;">41.108</div>
<div class="a t" style="left:1734.99px;top:258.01px;font-size:12px;color:#000;letter-spacing:-0.400px;">39.344</div>
<div class="a t" style="left:387.02px;top:283.01px;font-size:12px;color:#000;font-weight:bold;">0.2</div>
<div class="a t" style="left:729.02px;top:283.01px;font-size:12px;color:#000;font-weight:bold;">1.2</div>
<div class="a t" style="left:1071.02px;top:283.01px;font-size:12px;color:#000;font-weight:bold;">1.1</div>
<div class="a t" style="left:1412.02px;top:283.01px;font-size:12px;color:#000;font-weight:bold;">0.9</div>
<div class="a t" style="left:1753.02px;top:283.01px;font-size:12px;color:#000;font-weight:bold;">1.9</div>
<div class="a t" style="left:368.99px;top:308.01px;font-size:12px;color:#000;letter-spacing:-0.400px;">0.0002</div>
<div class="a t" style="left:710.99px;top:308.01px;font-size:12px;color:#000;letter-spacing:-0.400px;">0.0021</div>
<div class="a t" style="left:1052.99px;top:308.01px;font-size:12px;color:#000;letter-spacing:-0.400px;">0.0040</div>
<div class="a t" style="left:1393.99px;top:308.01px;font-size:12px;color:#000;letter-spacing:-0.400px;">0.0045</div>
<div class="a t" style="left:1734.99px;top:308.01px;font-size:12px;color:#000;letter-spacing:-0.400px;">0.0020</div>
<div class="a t" style="left:371.02px;top:333.01px;font-size:12px;color:#000;letter-spacing:-0.400px;">-1.0 %</div>
<div class="a t" style="left:713.02px;top:333.01px;font-size:12px;color:#000;letter-spacing:-0.400px;">-4.9 %</div>
<div class="a t" style="left:1055.02px;top:333.01px;font-size:12px;color:#000;letter-spacing:-0.400px;">-4.7 %</div>
<div class="a t" style="left:1396.02px;top:333.01px;font-size:12px;color:#000;letter-spacing:-0.400px;">-3.8 %</div>
<div class="a t" style="left:1737.02px;top:333.01px;font-size:12px;color:#000;letter-spacing:-0.400px;">-7.9 %</div>
<div class="a" style="left:1771px;top:178px;width:18px;height:178px;background:#f0f0f0"></div>
<div class="a" style="left:1779px;top:195px;width:2px;height:141px;background:#808080"></div>
<div class="a" style="left:11px;top:354px;width:1778px;height:1px;background:#fff"></div>
<div class="a" style="left:11px;top:355px;width:1760px;height:17px;background:#f0f0f0"></div>
<svg class="a" style="left:14px;top:360px" width="8" height="9" viewBox="0 0 8 9"><path d="M7 0 V9 L1 4.5Z" fill="#a0a0a0"/></svg>
<svg class="a" style="left:1759px;top:358px" width="8" height="9" viewBox="0 0 8 9"><path d="M1 0 V9 L7 4.5Z" fill="#a0a0a0"/></svg>
<div class="a" style="left:1771px;top:356px;width:18px;height:16px;background:#f0f0f0"></div>
<div class="a" style="left:1813px;top:159px;width:87px;height:221px;background:#fff"></div>
<div class="a" style="left:1897px;top:159px;width:3px;height:221px;background:#6e6e6e"></div>
<div class="a" style="left:1815px;top:162px;width:80px;height:100px;background:#707070"></div>
<div class="a" style="left:1816px;top:163px;width:78px;height:97px;background:#ebebeb"></div>
<div class="a" style="left:1816px;top:163px;width:78px;height:17px;background:linear-gradient(90deg,#e3eaf5,#edf2f9);border-radius:5px 5px 0 0"></div>
<div class="a" style="left:1816px;top:180px;width:78px;height:1px;background:#8a8a8a"></div>
<div class="a t" style="left:1822.60px;top:165.86px;font-size:12.3px;color:#3a3a3a;font-weight:bold;letter-spacing:0.508px;">Display</div>
<div class="a" style="left:1818px;top:178.7px;width:66px;height:15px;background:#f0f0f0"></div>
<div class="a" style="left:1818px;top:194.5px;width:66px;height:15px;background:#f0f0f0"></div>
<div class="a" style="left:1818px;top:210.7px;width:66px;height:15px;background:#f0f0f0"></div>
<div class="a" style="left:1818px;top:226.4px;width:66px;height:15px;background:#f0f0f0"></div>
<div class="a" style="left:1818px;top:241.2px;width:66px;height:15px;background:#f0f0f0"></div>
<div class="a" style="left:1822px;top:181.7px;width:12px;height:12px;background:#f6f6f6;border:1px solid #c4c4c4;border-radius:50%"></div>
<div class="a t" style="left:1839.30px;top:182.76px;font-size:12.5px;color:#7a7a7a;">Sensor</div>
<div class="a" style="left:1822px;top:197.5px;width:12px;height:12px;background:#f6f6f6;border:1px solid #333;border-radius:50%"></div>
<div class="a t" style="left:1839.30px;top:197.76px;font-size:12.5px;color:#000;">RGB</div>
<div class="a" style="left:1822px;top:213.7px;width:12px;height:12px;background:#f6f6f6;border:1px solid #333;border-radius:50%"></div>
<div class="a t" style="left:1839.30px;top:214.76px;font-size:12.5px;color:#000;">XYZ</div>
<div class="a" style="left:1822px;top:229.4px;width:12px;height:12px;background:#f6f6f6;border:1px solid #333;border-radius:50%"></div>
<div class="a t" style="left:1839.30px;top:229.76px;font-size:12.5px;color:#000;">xyz</div>
<div class="a" style="left:1822px;top:244.2px;width:12px;height:12px;background:#fff;border:3.5px solid #0a5ab4;border-radius:50%"></div>
<div class="a t" style="left:1839.30px;top:244.76px;font-size:12.5px;color:#000;">xyY</div>
<div class="a" style="left:1813px;top:262px;width:83px;height:92px;background:#fff"></div>
<div class="a" style="left:1813px;top:264px;width:82px;height:29px;background:#ebebeb"></div>
<div class="a" style="left:1813px;top:294px;width:82px;height:29px;background:#ebebeb"></div>
<div class="a" style="left:1813px;top:324px;width:82px;height:29px;background:#ebebeb"></div>
<div class="a" style="left:1813px;top:354px;width:87px;height:26px;background:#8a8a8a"></div>
<svg class="a" style="left:1817px;top:264px;" width="33" height="33" viewBox="0 0 33 33"><path d="M2 2 H10 Q14 9 13 25.5 H2Z" fill="#c8c8c8" stroke="#000" stroke-width="0.9"/><path d="M3 5 H7 M3 11.5 H7 M3 18 H7" stroke="#fff" stroke-width="1.6"/><path d="M5 7.5 Q9 7.5 9 9.5 Q9 11 6 11 M5 14 Q9 14 9 16 Q9 17.5 6 17.5" fill="none" stroke="#505050" stroke-width="0.8"/><path d="M1.3 1 V26.5" stroke="#000" stroke-width="2.4" stroke-dasharray="1.1 0.9"/><path d="M21 10 L26 14 H30 V31.5 H23 Q20 22 21 10Z" fill="#c8c8c8" stroke="#000" stroke-width="0.9"/><path d="M27 17 Q23 17 23 19.5 Q23 22 27 22" fill="none" stroke="#505050" stroke-width="0.8"/><path d="M30.8 8 V32" stroke="#000" stroke-width="2.4" stroke-dasharray="1.1 0.9"/><path d="M2.5 1.5 Q12 0.5 19 1 Q22 5 22 10 L12 13 Q10.5 6 2.5 1.5Z" fill="#f01010" stroke="#000" stroke-width="1.3"/><path d="M12 13 L22 10 Q22.3 16 23.5 19.8 L13 23 Q12.2 18 12 13Z" fill="#e01010" stroke="#000" stroke-width="1.3"/><path d="M13 23 L23.5 19.8 Q26 23 31 24 L24.5 31.5 H18.5 Q14 28 13 23Z" fill="#d01010" stroke="#000" stroke-width="1.3"/></svg>
<svg class="a" style="left:1818px;top:296px" width="30" height="26" viewBox="0 0 30 26"><path d="M2 2 Q15 -1 28 2 L24 23 Q14 27 5 23 Z" fill="#9cd4f4" stroke="#5aa0d8"/><ellipse cx="14" cy="21" rx="9" ry="3" fill="#c8ecfc"/><path d="M10 14 A5 5 0 0 1 19 10 L21 8 V14 H15 L17 12 A3 3 0 0 0 12 14Z M19 14 A5 5 0 0 1 10 18 L8 20 V14 H14 L12 16 A3 3 0 0 0 17 14Z" fill="#20a020"/></svg>
<svg class="a" style="left:1817px;top:329px" width="33" height="22" viewBox="0 0 33 22"><path d="M0 22 V10 L3 8 L6 3 L8 8 L11 9 V22Z" fill="#0000f0"/><rect x="0" y="12" width="3" height="10" fill="#f000f0"/><rect x="3" y="12" width="3" height="10" fill="#000080"/><rect x="8" y="9" width="4" height="13" fill="#00f0f0"/><rect x="12" y="10" width="4" height="12" fill="#00f000"/><path d="M15 22 V6 L19 1 L22 4 V22Z" fill="#f0f000"/><path d="M22 22 V3 L24 4 L26 9 V22Z" fill="#800000"/><path d="M26 22 V9 L29 7 L33 9 V22Z" fill="#f00000"/></svg>
<div class="a t" style="left:1863.40px;top:273.76px;font-size:12.5px;color:#000;letter-spacing:-0.475px;">Go</div>
<div class="a t" style="left:1851.30px;top:303.76px;font-size:12.5px;color:#000;letter-spacing:0.832px;">Delete</div>
<div class="a t" style="left:1858.00px;top:333.76px;font-size:12.5px;color:#000;letter-spacing:0.233px;">Refs</div>
<div class="a" style="left:1818px;top:361px;width:12px;height:12px;background:#f4f4f4;border:1px solid #bbb;border-radius:3px"></div>
<div class="a t" style="left:1835.00px;top:361.76px;font-size:12.5px;color:#000;letter-spacing:0.654px;">Edit</div>
<div class="a" style="left:5px;top:387px;width:380px;height:630px;background:#707070"></div>
<div class="a" style="left:6px;top:388px;width:377px;height:627px;background:#ebebeb"></div>
<div class="a" style="left:6px;top:388px;width:377px;height:17px;background:linear-gradient(90deg,#e3eaf5,#edf2f9);border-radius:5px 5px 0 0"></div>
<div class="a" style="left:6px;top:405px;width:377px;height:1px;background:#8a8a8a"></div>
<div class="a t" style="left:12.30px;top:390.86px;font-size:12.3px;color:#3a3a3a;font-weight:bold;letter-spacing:0.632px;">Selected color</div>
<div class="a" style="left:17px;top:409px;width:111px;height:15px;background:#f0f0f0"></div>
<div class="a t" style="left:18.00px;top:410.76px;font-size:12.5px;color:#000;letter-spacing:0.201px;">RGB Levels</div>
<div class="a" style="left:230px;top:406px;width:128px;height:15px;background:#f0f0f0"></div>
<div class="a t" style="left:241.50px;top:408.76px;font-size:12.5px;color:#000;letter-spacing:0.801px;">Current Measure</div>
<div class="a" style="left:14px;top:433px;width:200px;height:86px;background:#f0f0f0"></div>
<div class="a" style="left:14px;top:477px;width:200px;height:1px;background:repeating-linear-gradient(90deg,#808080 0 4px,transparent 4px 7px)"></div>
<svg class="a" style="left:14px;top:505px" width="200" height="15" viewBox="0 0 200 15"><path d="M0 9 Q25 -1 50 9 Z" fill="#a00000" stroke="#000" stroke-width="1"/><path d="M50 9 Q75 -1 100 9 Z" fill="#00a000" stroke="#000" stroke-width="1"/><path d="M100 9 Q125 -1 150 9 Z" fill="#0000b0" stroke="#000" stroke-width="1"/><path d="M150 9 Q175 -1 200 9 Z" fill="#c08a10" stroke="#000" stroke-width="1"/><rect x="0" y="8.5" width="200" height="6" fill="#000"/></svg>
<div class="a t" style="left:26.00px;top:496.26px;font-size:11.5px;color:#000;font-family:'Liberation Serif', serif;font-weight:bold;letter-spacing:-0.292px;">0.0%</div>
<div class="a t" style="left:76.90px;top:496.26px;font-size:11.5px;color:#000;font-family:'Liberation Serif', serif;font-weight:bold;letter-spacing:-0.292px;">0.0%</div>
<div class="a t" style="left:127.80px;top:496.26px;font-size:11.5px;color:#000;font-family:'Liberation Serif', serif;font-weight:bold;letter-spacing:-0.292px;">0.0%</div>
<div class="a t" style="left:175.00px;top:496.26px;font-size:11.5px;color:#000;font-family:'Liberation Serif', serif;font-weight:bold;letter-spacing:0.397px;">dE 0.0</div>
<div class="a" style="left:16px;top:533px;width:192px;height:74px;background:#f0f0f0"></div>
<div class="a t" style="left:35.20px;top:536.01px;font-size:12px;color:#000;font-weight:bold;letter-spacing:1.301px;">Measure</div>
<div class="a t" style="left:127.80px;top:536.01px;font-size:12px;color:#000;font-weight:bold;letter-spacing:0.846px;">Reference</div>
<div class="a" style="left:17px;top:622px;width:43px;height:15px;background:#f0f0f0"></div>
<div class="a t" style="left:18.10px;top:623.76px;font-size:12.5px;color:#000;letter-spacing:0.973px;">Target</div>
<svg class="a" style="left:50px;top:638px" width="117" height="90" viewBox="0 0 117 90"><defs><linearGradient id="tg1" x1="0" y1="0" x2="1" y2="0"><stop offset="0" stop-color="#00ff88"/><stop offset="0.5" stop-color="#40ff00"/><stop offset="1" stop-color="#ffc000"/></linearGradient><linearGradient id="tg2" x1="0" y1="0" x2="1" y2="0"><stop offset="0" stop-color="#0000ff"/><stop offset="0.5" stop-color="#8000c0"/><stop offset="1" stop-color="#ff0080"/></linearGradient><linearGradient id="tg3" x1="0" y1="0" x2="0" y2="1"><stop offset="0" stop-color="#00ff88"/><stop offset="0.5" stop-color="#0090a0"/><stop offset="1" stop-color="#0000ff"/></linearGradient><linearGradient id="tg4" x1="0" y1="0" x2="0" y2="1"><stop offset="0" stop-color="#ffc000"/><stop offset="0.5" stop-color="#ff0000"/><stop offset="1" stop-color="#ff0080"/></linearGradient></defs><rect x="0.5" y="0.5" width="116" height="89" fill="#000"/><rect x="1" y="1" width="115" height="88" fill="url(#tg3)"/><path d="M58 45 L116 1 V89Z" fill="url(#tg4)"/><path d="M58 45 L1 1 H116Z" fill="url(#tg1)"/><path d="M58 45 L1 89 H116Z" fill="url(#tg2)"/><rect x="17.5" y="13.5" width="81" height="62" rx="7" fill="#000" stroke="#fff"/><path d="M58 13 V76 M16 44.5 H101" stroke="#fff" stroke-dasharray="3 2"/><ellipse cx="58" cy="44.5" rx="21" ry="15.5" fill="none" stroke="#fff" stroke-dasharray="3 3"/></svg>
<div class="a" style="left:220px;top:430px;width:153px;height:579px;background:#f0f0f0"></div>
<div class="a" style="left:220px;top:430px;width:153px;height:1px;background:#a0a0a0"></div>
<div class="a" style="left:220px;top:430px;width:2px;height:579px;background:#6a6a6a"></div>
<div class="a" style="left:220px;top:430px;width:153px;height:2px;background:#6a6a6a"></div>
<div class="a" style="left:222px;top:432px;width:58px;height:23px;background:#f0f0f0"></div>
<div class="a" style="left:281px;top:432px;width:73px;height:23px;background:#fff"></div>
<div class="a" style="left:222px;top:454px;width:58px;height:1px;background:#6a6a6a"></div>
<div class="a" style="left:281px;top:454px;width:73px;height:1px;background:#c0c0c0"></div>
<div class="a t" style="left:229.44px;top:438.01px;font-size:12px;color:#000;font-weight:bold;">Y cd/m²</div>
<div class="a" style="left:222px;top:455px;width:58px;height:23px;background:#f0f0f0"></div>
<div class="a" style="left:281px;top:455px;width:73px;height:23px;background:#fff"></div>
<div class="a" style="left:222px;top:477px;width:58px;height:1px;background:#6a6a6a"></div>
<div class="a" style="left:281px;top:477px;width:73px;height:1px;background:#c0c0c0"></div>
<div class="a t" style="left:237.78px;top:462.01px;font-size:12px;color:#000;font-weight:bold;">Y ftL</div>
<div class="a" style="left:222px;top:478px;width:58px;height:23px;background:#f0f0f0"></div>
<div class="a" style="left:281px;top:478px;width:73px;height:23px;background:#fff"></div>
<div class="a" style="left:222px;top:500px;width:58px;height:1px;background:#6a6a6a"></div>
<div class="a" style="left:281px;top:500px;width:73px;height:1px;background:#c0c0c0"></div>
<div class="a t" style="left:244.93px;top:484.01px;font-size:12px;color:#000;font-weight:bold;">T°</div>
<div class="a" style="left:222px;top:501px;width:58px;height:23px;background:#f0f0f0"></div>
<div class="a" style="left:281px;top:501px;width:73px;height:23px;background:#dedede"></div>
<div class="a" style="left:222px;top:523px;width:58px;height:1px;background:#6a6a6a"></div>
<div class="a" style="left:281px;top:523px;width:73px;height:1px;background:#c0c0c0"></div>
<div class="a t" style="left:247.00px;top:508.01px;font-size:12px;color:#000;font-weight:bold;">X</div>
<div class="a" style="left:222px;top:524px;width:58px;height:23px;background:#f0f0f0"></div>
<div class="a" style="left:281px;top:524px;width:73px;height:23px;background:#dedede"></div>
<div class="a" style="left:222px;top:546px;width:58px;height:1px;background:#6a6a6a"></div>
<div class="a" style="left:281px;top:546px;width:73px;height:1px;background:#c0c0c0"></div>
<div class="a t" style="left:247.00px;top:530.01px;font-size:12px;color:#000;font-weight:bold;">Y</div>
<div class="a" style="left:222px;top:547px;width:58px;height:23px;background:#f0f0f0"></div>
<div class="a" style="left:281px;top:547px;width:73px;height:23px;background:#dedede"></div>
<div class="a" style="left:222px;top:569px;width:58px;height:1px;background:#6a6a6a"></div>
<div class="a" style="left:281px;top:569px;width:73px;height:1px;background:#c0c0c0"></div>
<div class="a t" style="left:247.33px;top:554.01px;font-size:12px;color:#000;font-weight:bold;">Z</div>
<div class="a" style="left:222px;top:570px;width:58px;height:23px;background:#f0f0f0"></div>
<div class="a" style="left:281px;top:570px;width:73px;height:23px;background:#fff"></div>
<div class="a" style="left:222px;top:592px;width:58px;height:1px;background:#6a6a6a"></div>
<div class="a" style="left:281px;top:592px;width:73px;height:1px;background:#c0c0c0"></div>
<div class="a t" style="left:246.67px;top:576.01px;font-size:12px;color:#000;font-weight:bold;">R</div>
<div class="a" style="left:222px;top:593px;width:58px;height:23px;background:#f0f0f0"></div>
<div class="a" style="left:281px;top:593px;width:73px;height:23px;background:#fff"></div>
<div class="a" style="left:222px;top:615px;width:58px;height:1px;background:#6a6a6a"></div>
<div class="a" style="left:281px;top:615px;width:73px;height:1px;background:#c0c0c0"></div>
<div class="a t" style="left:246.33px;top:600.01px;font-size:12px;color:#000;font-weight:bold;">G</div>
<div class="a" style="left:222px;top:616px;width:58px;height:23px;background:#f0f0f0"></div>
<div class="a" style="left:281px;top:616px;width:73px;height:23px;background:#fff"></div>
<div class="a" style="left:222px;top:638px;width:58px;height:1px;background:#6a6a6a"></div>
<div class="a" style="left:281px;top:638px;width:73px;height:1px;background:#c0c0c0"></div>
<div class="a t" style="left:246.67px;top:622.01px;font-size:12px;color:#000;font-weight:bold;">B</div>
<div class="a" style="left:222px;top:639px;width:58px;height:23px;background:#f0f0f0"></div>
<div class="a" style="left:281px;top:639px;width:73px;height:23px;background:#dedede"></div>
<div class="a" style="left:222px;top:661px;width:58px;height:1px;background:#6a6a6a"></div>
<div class="a" style="left:281px;top:661px;width:73px;height:1px;background:#c0c0c0"></div>
<div class="a t" style="left:247.66px;top:646.01px;font-size:12px;color:#000;font-weight:bold;">x</div>
<div class="a" style="left:222px;top:662px;width:58px;height:23px;background:#f0f0f0"></div>
<div class="a" style="left:281px;top:662px;width:73px;height:23px;background:#dedede"></div>
<div class="a" style="left:222px;top:684px;width:58px;height:1px;background:#6a6a6a"></div>
<div class="a" style="left:281px;top:684px;width:73px;height:1px;background:#c0c0c0"></div>
<div class="a t" style="left:247.66px;top:668.01px;font-size:12px;color:#000;font-weight:bold;">y</div>
<div class="a" style="left:222px;top:685px;width:58px;height:23px;background:#f0f0f0"></div>
<div class="a" style="left:281px;top:685px;width:73px;height:23px;background:#dedede"></div>
<div class="a" style="left:222px;top:707px;width:58px;height:1px;background:#6a6a6a"></div>
<div class="a" style="left:281px;top:707px;width:73px;height:1px;background:#c0c0c0"></div>
<div class="a t" style="left:247.00px;top:692.01px;font-size:12px;color:#000;font-weight:bold;">Y</div>
<div class="a" style="left:222px;top:708px;width:58px;height:23px;background:#f0f0f0"></div>
<div class="a" style="left:281px;top:708px;width:73px;height:23px;background:#fff"></div>
<div class="a" style="left:222px;top:730px;width:58px;height:1px;background:#6a6a6a"></div>
<div class="a" style="left:281px;top:730px;width:73px;height:1px;background:#c0c0c0"></div>
<div class="a t" style="left:247.66px;top:714.01px;font-size:12px;color:#000;font-weight:bold;">x</div>
<div class="a" style="left:222px;top:731px;width:58px;height:23px;background:#f0f0f0"></div>
<div class="a" style="left:281px;top:731px;width:73px;height:23px;background:#fff"></div>
<div class="a" style="left:222px;top:753px;width:58px;height:1px;background:#6a6a6a"></div>
<div class="a" style="left:281px;top:753px;width:73px;height:1px;background:#c0c0c0"></div>
<div class="a t" style="left:247.66px;top:738.01px;font-size:12px;color:#000;font-weight:bold;">y</div>
<div class="a" style="left:222px;top:754px;width:58px;height:23px;background:#f0f0f0"></div>
<div class="a" style="left:281px;top:754px;width:73px;height:23px;background:#fff"></div>
<div class="a" style="left:222px;top:776px;width:58px;height:1px;background:#6a6a6a"></div>
<div class="a" style="left:281px;top:776px;width:73px;height:1px;background:#c0c0c0"></div>
<div class="a t" style="left:248.00px;top:760.01px;font-size:12px;color:#000;font-weight:bold;">z</div>
<div class="a" style="left:222px;top:777px;width:58px;height:23px;background:#f0f0f0"></div>
<div class="a" style="left:281px;top:777px;width:73px;height:23px;background:#dedede"></div>
<div class="a" style="left:222px;top:799px;width:58px;height:1px;background:#6a6a6a"></div>
<div class="a" style="left:281px;top:799px;width:73px;height:1px;background:#c0c0c0"></div>
<div class="a t" style="left:247.33px;top:784.01px;font-size:12px;color:#000;font-weight:bold;">L</div>
<div class="a" style="left:222px;top:800px;width:58px;height:23px;background:#f0f0f0"></div>
<div class="a" style="left:281px;top:800px;width:73px;height:23px;background:#dedede"></div>
<div class="a" style="left:222px;top:822px;width:58px;height:1px;background:#6a6a6a"></div>
<div class="a" style="left:281px;top:822px;width:73px;height:1px;background:#c0c0c0"></div>
<div class="a t" style="left:247.62px;top:806.01px;font-size:12px;color:#000;font-weight:bold;">a</div>
<div class="a" style="left:222px;top:823px;width:58px;height:23px;background:#f0f0f0"></div>
<div class="a" style="left:281px;top:823px;width:73px;height:23px;background:#dedede"></div>
<div class="a" style="left:222px;top:845px;width:58px;height:1px;background:#6a6a6a"></div>
<div class="a" style="left:281px;top:845px;width:73px;height:1px;background:#c0c0c0"></div>
<div class="a t" style="left:247.33px;top:830.01px;font-size:12px;color:#000;font-weight:bold;">b</div>
<div class="a" style="left:222px;top:846px;width:58px;height:23px;background:#f0f0f0"></div>
<div class="a" style="left:281px;top:846px;width:73px;height:23px;background:#fff"></div>
<div class="a" style="left:222px;top:868px;width:58px;height:1px;background:#6a6a6a"></div>
<div class="a" style="left:281px;top:868px;width:73px;height:1px;background:#c0c0c0"></div>
<div class="a t" style="left:247.33px;top:852.01px;font-size:12px;color:#000;font-weight:bold;">L</div>
<div class="a" style="left:222px;top:869px;width:58px;height:23px;background:#f0f0f0"></div>
<div class="a" style="left:281px;top:869px;width:73px;height:23px;background:#fff"></div>
<div class="a" style="left:222px;top:891px;width:58px;height:1px;background:#6a6a6a"></div>
<div class="a" style="left:281px;top:891px;width:73px;height:1px;background:#c0c0c0"></div>
<div class="a t" style="left:246.67px;top:876.01px;font-size:12px;color:#000;font-weight:bold;">C</div>
<div class="a" style="left:222px;top:892px;width:58px;height:23px;background:#f0f0f0"></div>
<div class="a" style="left:281px;top:892px;width:73px;height:23px;background:#fff"></div>
<div class="a" style="left:222px;top:914px;width:58px;height:1px;background:#6a6a6a"></div>
<div class="a" style="left:281px;top:914px;width:73px;height:1px;background:#c0c0c0"></div>
<div class="a t" style="left:246.67px;top:898.01px;font-size:12px;color:#000;font-weight:bold;">H</div>
<div class="a" style="left:222px;top:915px;width:58px;height:23px;background:#f0f0f0"></div>
<div class="a" style="left:281px;top:915px;width:73px;height:23px;background:#dedede"></div>
<div class="a" style="left:222px;top:937px;width:58px;height:1px;background:#6a6a6a"></div>
<div class="a" style="left:281px;top:937px;width:73px;height:1px;background:#c0c0c0"></div>
<div class="a t" style="left:247.33px;top:922.01px;font-size:12px;color:#000;font-weight:bold;">L</div>
<div class="a" style="left:222px;top:938px;width:58px;height:23px;background:#f0f0f0"></div>
<div class="a" style="left:281px;top:938px;width:73px;height:23px;background:#dedede"></div>
<div class="a" style="left:222px;top:960px;width:58px;height:1px;background:#6a6a6a"></div>
<div class="a" style="left:281px;top:960px;width:73px;height:1px;background:#c0c0c0"></div>
<div class="a t" style="left:246.00px;top:944.01px;font-size:12px;color:#000;font-weight:bold;">M</div>
<div class="a" style="left:222px;top:961px;width:58px;height:23px;background:#f0f0f0"></div>
<div class="a" style="left:281px;top:961px;width:73px;height:23px;background:#dedede"></div>
<div class="a" style="left:222px;top:983px;width:58px;height:1px;background:#6a6a6a"></div>
<div class="a" style="left:281px;top:983px;width:73px;height:1px;background:#c0c0c0"></div>
<div class="a t" style="left:247.00px;top:968.01px;font-size:12px;color:#000;font-weight:bold;">S</div>
<div class="a" style="left:280px;top:432px;width:1px;height:552px;background:#6a6a6a"></div>
<div class="a" style="left:222px;top:984px;width:132px;height:22px;background:#a0a0a0"></div>
<svg class="a" style="left:358px;top:436px" width="10" height="570" viewBox="0 0 10 570"><path d="M1 7 L5 2 L9 7Z M1 563 L5 568 L9 563Z" fill="#a8a8a8"/></svg>
<div class="a" style="left:391px;top:387px;width:1505px;height:630px;background:#707070"></div>
<div class="a" style="left:392px;top:388px;width:1502px;height:627px;background:#ebebeb"></div>
<div class="a" style="left:392px;top:388px;width:1502px;height:17px;background:linear-gradient(90deg,#e3eaf5,#edf2f9);border-radius:5px 5px 0 0"></div>
<div class="a" style="left:392px;top:405px;width:1502px;height:1px;background:#8a8a8a"></div>
<div class="a t" style="left:398.50px;top:390.86px;font-size:12.3px;color:#3a3a3a;font-weight:bold;letter-spacing:0.935px;">Information</div>
<div class="a" style="left:399px;top:412px;width:302px;height:22px;background:#fff;border:1px solid #c0c0c0;border-top-color:#a0a0a0;border-left-color:#a0a0a0"></div>
<div class="a t" style="left:403.00px;top:417.01px;font-size:13px;color:#000;letter-spacing:0.350px;">Luminance - Gamma</div>
<svg class="a" style="left:686px;top:420px" width="10" height="6" viewBox="0 0 10 6"><path d="M0.5 0.5 L5 5 L9.5 0.5" fill="none" stroke="#404040" stroke-width="1"/></svg>
<div class="a" style="left:398px;top:439px;width:747px;height:568px;background:#f4f4f4"></div>
<div class="a" style="left:398px;top:439px;width:745px;height:2px;background:#8a8a8a"></div>
<div class="a" style="left:398px;top:439px;width:2px;height:566px;background:#8a8a8a"></div>
<div class="a" style="left:400px;top:441px;width:743px;height:1px;background:#b0b0b0"></div>
<div class="a" style="left:400px;top:441px;width:1px;height:564px;background:#b0b0b0"></div>
<div class="a" style="left:402px;top:443px;width:74px;height:562px;background:linear-gradient(90deg,rgb(31,31,31),rgb(51,51,51))"></div>
<div class="a" style="left:476px;top:443px;width:74px;height:562px;background:linear-gradient(90deg,rgb(53,53,53),rgb(73,73,73))"></div>
<div class="a" style="left:550px;top:443px;width:74px;height:562px;background:linear-gradient(90deg,rgb(76,76,76),rgb(96,96,96))"></div>
<div class="a" style="left:624px;top:443px;width:74px;height:562px;background:linear-gradient(90deg,rgb(98,98,98),rgb(118,118,118))"></div>
<div class="a" style="left:698px;top:443px;width:74px;height:562px;background:linear-gradient(90deg,rgb(121,121,121),rgb(141,141,141))"></div>
<div class="a" style="left:772px;top:443px;width:74px;height:562px;background:linear-gradient(90deg,rgb(144,144,144),rgb(164,164,164))"></div>
<div class="a" style="left:846px;top:443px;width:74px;height:562px;background:linear-gradient(90deg,rgb(166,166,166),rgb(186,186,186))"></div>
<div class="a" style="left:920px;top:443px;width:74px;height:562px;background:linear-gradient(90deg,rgb(189,189,189),rgb(209,209,209))"></div>
<div class="a" style="left:994px;top:443px;width:74px;height:562px;background:linear-gradient(90deg,rgb(211,211,211),rgb(231,231,231))"></div>
<div class="a" style="left:1068px;top:443px;width:75px;height:562px;background:linear-gradient(90deg,rgb(234,234,234),rgb(254,254,254))"></div>
<div class="a" style="left:1146px;top:439px;width:747px;height:568px;background:#f4f4f4"></div>
<div class="a" style="left:1146px;top:439px;width:745px;height:2px;background:#8a8a8a"></div>
<div class="a" style="left:1146px;top:439px;width:2px;height:566px;background:#8a8a8a"></div>
<div class="a" style="left:1148px;top:441px;width:743px;height:1px;background:#b0b0b0"></div>
<div class="a" style="left:1148px;top:441px;width:1px;height:564px;background:#b0b0b0"></div>
<div class="a" style="left:1150px;top:443px;width:74px;height:562px;background:linear-gradient(90deg,rgb(31,31,31),rgb(51,51,51))"></div>
<div class="a" style="left:1224px;top:443px;width:74px;height:562px;background:linear-gradient(90deg,rgb(53,53,53),rgb(73,73,73))"></div>
<div class="a" style="left:1298px;top:443px;width:74px;height:562px;background:linear-gradient(90deg,rgb(76,76,76),rgb(96,96,96))"></div>
<div class="a" style="left:1372px;top:443px;width:74px;height:562px;background:linear-gradient(90deg,rgb(98,98,98),rgb(118,118,118))"></div>
<div class="a" style="left:1446px;top:443px;width:74px;height:562px;background:linear-gradient(90deg,rgb(121,121,121),rgb(141,141,141))"></div>
<div class="a" style="left:1520px;top:443px;width:74px;height:562px;background:linear-gradient(90deg,rgb(144,144,144),rgb(164,164,164))"></div>
<div class="a" style="left:1594px;top:443px;width:74px;height:562px;background:linear-gradient(90deg,rgb(166,166,166),rgb(186,186,186))"></div>
<div class="a" style="left:1668px;top:443px;width:74px;height:562px;background:linear-gradient(90deg,rgb(189,189,189),rgb(209,209,209))"></div>
<div class="a" style="left:1742px;top:443px;width:74px;height:562px;background:linear-gradient(90deg,rgb(211,211,211),rgb(231,231,231))"></div>
<div class="a" style="left:1816px;top:443px;width:75px;height:562px;background:linear-gradient(90deg,rgb(234,234,234),rgb(254,254,254))"></div>
<div class="a" style="left:1143px;top:439px;width:3px;height:570px;background:#f4f4f4"></div>
<div class="a t" style="left:404.90px;top:918.86px;font-size:13.3px;color:#d8d8d8;font-family:'Liberation Serif', serif;letter-spacing:1.159px;">25 cd m-2</div>
<div class="a t" style="left:404.90px;top:848.86px;font-size:13.3px;color:#d8d8d8;font-family:'Liberation Serif', serif;letter-spacing:1.159px;">50 cd m-2</div>
<div class="a t" style="left:404.90px;top:778.86px;font-size:13.3px;color:#d8d8d8;font-family:'Liberation Serif', serif;letter-spacing:1.159px;">75 cd m-2</div>
<div class="a t" style="left:404.90px;top:708.86px;font-size:13.3px;color:#d8d8d8;font-family:'Liberation Serif', serif;letter-spacing:0.291px;">100 cd m-2</div>
<div class="a t" style="left:404.90px;top:638.86px;font-size:13.3px;color:#d8d8d8;font-family:'Liberation Serif', serif;letter-spacing:0.291px;">125 cd m-2</div>
<div class="a t" style="left:404.90px;top:567.86px;font-size:13.3px;color:#d8d8d8;font-family:'Liberation Serif', serif;letter-spacing:0.291px;">150 cd m-2</div>
<div class="a t" style="left:404.90px;top:497.86px;font-size:13.3px;color:#d8d8d8;font-family:'Liberation Serif', serif;letter-spacing:0.291px;">175 cd m-2</div>
<div class="a t" style="left:709.70px;top:444.69px;font-size:14.65px;color:#d8d800;font-weight:bold;">Luminance Response</div>
<div class="a t" style="left:977.50px;top:949.56px;font-size:15.9px;color:#a0a0a0;font-weight:bold;letter-spacing:0.040px;">hcfr.sourceforge.net</div>
<div class="a t" style="left:478.50px;top:989.66px;font-size:13.7px;color:#e4e4e4;font-family:'Liberation Serif', serif;">10% White</div>
<div class="a t" style="left:1226.50px;top:989.66px;font-size:13.7px;color:#e4e4e4;font-family:'Liberation Serif', serif;">10% White</div>
<div class="a t" style="left:552.50px;top:989.66px;font-size:13.7px;color:#dcdcdc;font-family:'Liberation Serif', serif;">20% White</div>
<div class="a t" style="left:1300.50px;top:989.66px;font-size:13.7px;color:#dcdcdc;font-family:'Liberation Serif', serif;">20% White</div>
<div class="a t" style="left:626.50px;top:989.66px;font-size:13.7px;color:#c8c8c8;font-family:'Liberation Serif', serif;">30% White</div>
<div class="a t" style="left:1374.50px;top:989.66px;font-size:13.7px;color:#c8c8c8;font-family:'Liberation Serif', serif;">30% White</div>
<div class="a t" style="left:700.50px;top:989.66px;font-size:13.7px;color:#9c9c9c;font-family:'Liberation Serif', serif;">40% White</div>
<div class="a t" style="left:1448.50px;top:989.66px;font-size:13.7px;color:#9c9c9c;font-family:'Liberation Serif', serif;">40% White</div>
<div class="a t" style="left:774.50px;top:989.66px;font-size:13.7px;color:#8c8c8c;font-family:'Liberation Serif', serif;">50% White</div>
<div class="a t" style="left:1522.50px;top:989.66px;font-size:13.7px;color:#8c8c8c;font-family:'Liberation Serif', serif;">50% White</div>
<div class="a t" style="left:848.50px;top:989.66px;font-size:13.7px;color:#464646;font-family:'Liberation Serif', serif;">60% White</div>
<div class="a t" style="left:1596.50px;top:989.66px;font-size:13.7px;color:#464646;font-family:'Liberation Serif', serif;">60% White</div>
<div class="a t" style="left:922.50px;top:989.66px;font-size:13.7px;color:#343434;font-family:'Liberation Serif', serif;">70% White</div>
<div class="a t" style="left:1670.50px;top:989.66px;font-size:13.7px;color:#343434;font-family:'Liberation Serif', serif;">70% White</div>
<div class="a t" style="left:996.50px;top:989.66px;font-size:13.7px;color:#222;font-family:'Liberation Serif', serif;">80% White</div>
<div class="a t" style="left:1744.50px;top:989.66px;font-size:13.7px;color:#222;font-family:'Liberation Serif', serif;">80% White</div>
<div class="a t" style="left:1070.50px;top:989.66px;font-size:13.7px;color:#141414;font-family:'Liberation Serif', serif;">90% White</div>
<div class="a t" style="left:1818.50px;top:989.66px;font-size:13.7px;color:#141414;font-family:'Liberation Serif', serif;">90% White</div>
<div class="a t" style="left:1152.50px;top:960.91px;font-size:13.2px;color:#d8d8d8;font-family:'Liberation Serif', serif;">1.1</div>
<div class="a t" style="left:1152.50px;top:932.91px;font-size:13.2px;color:#d8d8d8;font-family:'Liberation Serif', serif;">1.2</div>
<div class="a t" style="left:1152.50px;top:904.91px;font-size:13.2px;color:#d8d8d8;font-family:'Liberation Serif', serif;">1.3</div>
<div class="a t" style="left:1152.50px;top:875.91px;font-size:13.2px;color:#d8d8d8;font-family:'Liberation Serif', serif;">1.4</div>
<div class="a t" style="left:1152.50px;top:847.91px;font-size:13.2px;color:#d8d8d8;font-family:'Liberation Serif', serif;">1.5</div>
<div class="a t" style="left:1152.50px;top:819.91px;font-size:13.2px;color:#d8d8d8;font-family:'Liberation Serif', serif;">1.6</div>
<div class="a t" style="left:1152.50px;top:791.91px;font-size:13.2px;color:#d8d8d8;font-family:'Liberation Serif', serif;">1.7</div>
<div class="a t" style="left:1152.50px;top:763.91px;font-size:13.2px;color:#d8d8d8;font-family:'Liberation Serif', serif;">1.8</div>
<div class="a t" style="left:1152.50px;top:735.91px;font-size:13.2px;color:#d8d8d8;font-family:'Liberation Serif', serif;">1.9</div>
<div class="a t" style="left:1152.50px;top:707.91px;font-size:13.2px;color:#d8d8d8;font-family:'Liberation Serif', serif;">2</div>
<div class="a t" style="left:1152.50px;top:679.91px;font-size:13.2px;color:#d8d8d8;font-family:'Liberation Serif', serif;">2.1</div>
<div class="a t" style="left:1152.50px;top:651.91px;font-size:13.2px;color:#d8d8d8;font-family:'Liberation Serif', serif;">2.2</div>
<div class="a t" style="left:1152.50px;top:623.91px;font-size:13.2px;color:#d8d8d8;font-family:'Liberation Serif', serif;">2.3</div>
<div class="a t" style="left:1152.50px;top:595.91px;font-size:13.2px;color:#d8d8d8;font-family:'Liberation Serif', serif;">2.4</div>
<div class="a t" style="left:1152.50px;top:567.91px;font-size:13.2px;color:#d8d8d8;font-family:'Liberation Serif', serif;">2.5</div>
<div class="a t" style="left:1152.50px;top:539.91px;font-size:13.2px;color:#d8d8d8;font-family:'Liberation Serif', serif;">2.6</div>
<div class="a t" style="left:1152.50px;top:511.91px;font-size:13.2px;color:#d8d8d8;font-family:'Liberation Serif', serif;">2.7</div>
<div class="a t" style="left:1152.50px;top:483.91px;font-size:13.2px;color:#d8d8d8;font-family:'Liberation Serif', serif;">2.8</div>
<div class="a t" style="left:1152.50px;top:454.91px;font-size:13.2px;color:#d8d8d8;font-family:'Liberation Serif', serif;">2.9</div>
<div class="a t" style="left:1481.80px;top:444.69px;font-size:14.65px;color:#d8d800;font-weight:bold;letter-spacing:-0.066px;">EOTF(Gamma)</div>
<div class="a t" style="left:1725.30px;top:949.56px;font-size:15.9px;color:#a0a0a0;font-weight:bold;letter-spacing:0.072px;">hcfr.sourceforge.net</div>
<div class="a" style="left:402px;top:443px;width:1px;height:562px;background:#004444"></div>
<div class="a" style="left:476px;top:443px;width:1px;height:562px;background:#004444"></div>
<div class="a" style="left:550px;top:443px;width:1px;height:562px;background:#004444"></div>
<div class="a" style="left:624px;top:443px;width:1px;height:562px;background:#004444"></div>
<div class="a" style="left:698px;top:443px;width:1px;height:562px;background:#004444"></div>
<div class="a" style="left:772px;top:443px;width:1px;height:562px;background:#004444"></div>
<div class="a" style="left:846px;top:443px;width:1px;height:562px;background:#004444"></div>
<div class="a" style="left:920px;top:443px;width:1px;height:562px;background:#004444"></div>
<div class="a" style="left:994px;top:443px;width:1px;height:562px;background:#004444"></div>
<div class="a" style="left:1068px;top:443px;width:1px;height:562px;background:#004444"></div>
<div class="a" style="left:402px;top:934px;width:741px;height:1px;background:#004444"></div>
<div class="a" style="left:402px;top:864px;width:741px;height:1px;background:#004444"></div>
<div class="a" style="left:402px;top:794px;width:741px;height:1px;background:#004444"></div>
<div class="a" style="left:402px;top:724px;width:741px;height:1px;background:#004444"></div>
<div class="a" style="left:402px;top:654px;width:741px;height:1px;background:#004444"></div>
<div class="a" style="left:402px;top:583px;width:741px;height:1px;background:#004444"></div>
<div class="a" style="left:402px;top:513px;width:741px;height:1px;background:#004444"></div>
<div class="a" style="left:1150px;top:443px;width:1px;height:562px;background:#004444"></div>
<div class="a" style="left:1224px;top:443px;width:1px;height:562px;background:#004444"></div>
<div class="a" style="left:1298px;top:443px;width:1px;height:562px;background:#004444"></div>
<div class="a" style="left:1372px;top:443px;width:1px;height:562px;background:#004444"></div>
<div class="a" style="left:1446px;top:443px;width:1px;height:562px;background:#004444"></div>
<div class="a" style="left:1520px;top:443px;width:1px;height:562px;background:#004444"></div>
<div class="a" style="left:1594px;top:443px;width:1px;height:562px;background:#004444"></div>
<div class="a" style="left:1668px;top:443px;width:1px;height:562px;background:#004444"></div>
<div class="a" style="left:1742px;top:443px;width:1px;height:562px;background:#004444"></div>
<div class="a" style="left:1816px;top:443px;width:1px;height:562px;background:#004444"></div>
<div class="a" style="left:1150px;top:977px;width:741px;height:1px;background:#004444"></div>
<div class="a" style="left:1150px;top:949px;width:741px;height:1px;background:#004444"></div>
<div class="a" style="left:1150px;top:921px;width:741px;height:1px;background:#004444"></div>
<div class="a" style="left:1150px;top:892px;width:741px;height:1px;background:#004444"></div>
<div class="a" style="left:1150px;top:864px;width:741px;height:1px;background:#004444"></div>
<div class="a" style="left:1150px;top:836px;width:741px;height:1px;background:#004444"></div>
<div class="a" style="left:1150px;top:808px;width:741px;height:1px;background:#004444"></div>
<div class="a" style="left:1150px;top:780px;width:741px;height:1px;background:#004444"></div>
<div class="a" style="left:1150px;top:752px;width:741px;height:1px;background:#004444"></div>
<div class="a" style="left:1150px;top:724px;width:741px;height:1px;background:#004444"></div>
<div class="a" style="left:1150px;top:696px;width:741px;height:1px;background:#004444"></div>
<div class="a" style="left:1150px;top:668px;width:741px;height:1px;background:#004444"></div>
<div class="a" style="left:1150px;top:640px;width:741px;height:1px;background:#004444"></div>
<div class="a" style="left:1150px;top:612px;width:741px;height:1px;background:#004444"></div>
<div class="a" style="left:1150px;top:584px;width:741px;height:1px;background:#004444"></div>
<div class="a" style="left:1150px;top:556px;width:741px;height:1px;background:#004444"></div>
<div class="a" style="left:1150px;top:528px;width:741px;height:1px;background:#004444"></div>
<div class="a" style="left:1150px;top:500px;width:741px;height:1px;background:#004444"></div>
<div class="a" style="left:1150px;top:471px;width:741px;height:1px;background:#004444"></div>
<svg class="a" style="left:402px;top:443px" width="741" height="562" viewBox="0 0 741 562" overflow="hidden"><polyline points="-4.2,562.2 33.0,561.4 70.1,558.7 107.3,553.6 144.4,546.0 181.6,535.7 218.8,522.7 255.9,506.7 293.1,487.8 330.2,465.7 367.4,440.6 404.6,412.2 441.7,380.6 478.9,345.6 516.0,307.2 553.2,265.5 590.4,220.2 627.5,171.4 664.7,119.0 701.8,63.0 739.0,3.4" fill="none" stroke="#ffff00" stroke-width="2"/><rect x="-8.2" y="558.2" width="8" height="8" fill="#e4e4e4"/><rect x="29.0" y="557.4" width="8" height="8" fill="#e4e4e4"/><rect x="66.1" y="554.7" width="8" height="8" fill="#e4e4e4"/><rect x="103.3" y="549.6" width="8" height="8" fill="#e4e4e4"/><rect x="140.4" y="542.0" width="8" height="8" fill="#e4e4e4"/><rect x="177.6" y="531.7" width="8" height="8" fill="#e4e4e4"/><rect x="214.8" y="518.7" width="8" height="8" fill="#e4e4e4"/><rect x="251.9" y="502.7" width="8" height="8" fill="#e4e4e4"/><rect x="289.1" y="483.8" width="8" height="8" fill="#e4e4e4"/><rect x="326.2" y="461.7" width="8" height="8" fill="#e4e4e4"/><rect x="363.4" y="436.6" width="8" height="8" fill="#e4e4e4"/><rect x="400.6" y="408.2" width="8" height="8" fill="#e4e4e4"/><rect x="437.7" y="376.6" width="8" height="8" fill="#e4e4e4"/><rect x="474.9" y="341.6" width="8" height="8" fill="#e4e4e4"/><rect x="512.0" y="303.2" width="8" height="8" fill="#e4e4e4"/><rect x="549.2" y="261.5" width="8" height="8" fill="#e4e4e4"/><rect x="586.4" y="216.2" width="8" height="8" fill="#e4e4e4"/><rect x="623.5" y="167.4" width="8" height="8" fill="#e4e4e4"/><rect x="660.7" y="115.0" width="8" height="8" fill="#e4e4e4"/><rect x="697.8" y="59.0" width="8" height="8" fill="#e4e4e4"/><rect x="735.0" y="-0.6" width="8" height="8" fill="#e4e4e4"/></svg>
<svg class="a" style="left:1150px;top:443px" width="741" height="562" viewBox="0 0 741 562"><defs><linearGradient id="rg" gradientUnits="userSpaceOnUse" x1="0" y1="0" x2="741" y2="0"><stop offset="0" stop-color="#f4f4f4"/><stop offset="0.45" stop-color="#d0d0d0"/><stop offset="0.5" stop-color="#303030"/><stop offset="1" stop-color="#101010"/></linearGradient></defs><line x1="33" y1="224.5" x2="701.7" y2="224.5" stroke="url(#rg)" stroke-width="1" stroke-dasharray="3 3"/><polyline points="33.0,224.0 70.2,221.0 107.3,223.0 144.5,222.0 181.6,223.0 218.8,223.0 255.9,224.0 293.0,223.0 330.2,223.5 367.3,222.0 404.5,223.5 441.7,223.0 478.8,222.0 516.0,225.0 553.1,224.5 590.2,224.0 627.4,227.0 664.5,225.0 701.7,232.0" fill="none" stroke="#ffff00" stroke-width="1.6"/><rect x="29.0" y="220.0" width="8" height="8" fill="#ffff00"/><rect x="66.2" y="217.0" width="8" height="8" fill="#ffff00"/><rect x="103.3" y="219.0" width="8" height="8" fill="#ffff00"/><rect x="140.5" y="218.0" width="8" height="8" fill="#ffff00"/><rect x="177.6" y="219.0" width="8" height="8" fill="#ffff00"/><rect x="214.8" y="219.0" width="8" height="8" fill="#ffff00"/><rect x="251.9" y="220.0" width="8" height="8" fill="#ffff00"/><rect x="289.0" y="219.0" width="8" height="8" fill="#ffff00"/><rect x="326.2" y="219.5" width="8" height="8" fill="#ffff00"/><rect x="363.3" y="218.0" width="8" height="8" fill="#ffff00"/><rect x="400.5" y="219.5" width="8" height="8" fill="#ffff00"/><rect x="437.7" y="219.0" width="8" height="8" fill="#ffff00"/><rect x="474.8" y="218.0" width="8" height="8" fill="#ffff00"/><rect x="512.0" y="221.0" width="8" height="8" fill="#ffff00"/><rect x="549.1" y="220.5" width="8" height="8" fill="#ffff00"/><rect x="586.2" y="220.0" width="8" height="8" fill="#ffff00"/><rect x="623.4" y="223.0" width="8" height="8" fill="#ffff00"/><rect x="660.5" y="221.0" width="8" height="8" fill="#ffff00"/><rect x="697.7" y="228.0" width="8" height="8" fill="#ffff00"/><rect x="29.0" y="220.5" width="8" height="8" fill="#e4e4e4"/><rect x="66.2" y="220.5" width="8" height="8" fill="#e4e4e4"/><rect x="103.3" y="220.5" width="8" height="8" fill="#e4e4e4"/><rect x="140.5" y="220.5" width="8" height="8" fill="#e4e4e4"/><rect x="177.6" y="220.5" width="8" height="8" fill="#e4e4e4"/><rect x="214.8" y="220.5" width="8" height="8" fill="#e4e4e4"/><rect x="251.9" y="220.5" width="8" height="8" fill="#e4e4e4"/><rect x="289.0" y="220.5" width="8" height="8" fill="#e4e4e4"/><rect x="326.2" y="220.5" width="8" height="8" fill="#e4e4e4"/><rect x="363.3" y="220.5" width="8" height="8" fill="#e4e4e4"/><rect x="400.5" y="220.5" width="8" height="8" fill="#e4e4e4"/><rect x="437.7" y="220.5" width="8" height="8" fill="#e4e4e4"/><rect x="474.8" y="220.5" width="8" height="8" fill="#e4e4e4"/><rect x="512.0" y="220.5" width="8" height="8" fill="#e4e4e4"/><rect x="549.1" y="220.5" width="8" height="8" fill="#e4e4e4"/><rect x="586.2" y="220.5" width="8" height="8" fill="#e4e4e4"/><rect x="623.4" y="220.5" width="8" height="8" fill="#e4e4e4"/><rect x="660.5" y="220.5" width="8" height="8" fill="#e4e4e4"/><rect x="697.7" y="220.5" width="8" height="8" fill="#e4e4e4"/></svg>
<div class="a" style="left:0px;top:1042px;width:1920px;height:20px;background:#f0f0f0"></div>
<div class="a" style="left:0px;top:1042px;width:55px;height:19px;background:#000"></div>
<div class="a" style="left:1px;top:1043px;width:16px;height:17px;background:#f0f0f0"></div>
<div class="a" style="left:18px;top:1043px;width:16px;height:17px;background:#f0f0f0"></div>
<div class="a" style="left:35px;top:1043px;width:18px;height:17px;background:#f0f0f0"></div>
<svg class="a" style="left:4px;top:1046px" width="48" height="11" viewBox="0 0 48 11"><path d="M1 1 L8 8 M8 1 L1 8" stroke="#000" stroke-width="1.3"/><path d="M27 1 L23 5 L27 9Z" fill="#000"/><path d="M40 1 L44 5 L40 9Z" fill="#000"/></svg>
<svg class="a" style="left:50px;top:1042px" width="300" height="20" viewBox="0 0 300 20"><path d="M0 0.5 H290" stroke="#000"/><path d="M4.4 0.5 L13 18.5 H69.3 L77.3 0.5Z" fill="#fff" stroke="#000"/><path d="M77.3 0.5 L70 18.5 H143 L136.4 0.5Z" fill="#f0f0f0" stroke="#000"/><path d="M136.4 0.5 L143 18.5 H195 L188 0.5Z" fill="#f0f0f0" stroke="#000"/><path d="M188 0.5 L195 18.5 H263 L271.4 0.5Z" fill="#f0f0f0" stroke="#000"/><path d="M4.4 0.5 L13 18.5 H69.3 L77.3 0.5" fill="#fff" stroke="#000"/></svg>
<div class="a t" style="left:66.40px;top:1046.51px;font-size:11px;color:#000;font-weight:bold;letter-spacing:-0.165px;">Measures</div>
<div class="a t" style="left:134.00px;top:1046.76px;font-size:10.5px;color:#000;letter-spacing:-0.808px;">Luminance</div>
<div class="a t" style="left:199.80px;top:1046.76px;font-size:10.5px;color:#000;letter-spacing:-1.212px;">Gamma</div>
<div class="a t" style="left:255.00px;top:1046.76px;font-size:10.5px;color:#000;letter-spacing:-0.713px;">RGB Levels</div>
<svg class="a" style="left:1751px;top:1043px" width="15" height="15" viewBox="0 0 15 15"><path d="M1 1 H13 V9 L11 13 H8 L7 11 L6 13 H3 L1 9Z" fill="#7a7a00" stroke="#303000" stroke-width="0.8"/><rect x="2.5" y="2.5" width="8" height="5" fill="#f0f0f0"/><path d="M3 4 H9 L8 3 M9 4 V7" stroke="#e02020" stroke-width="1.5" fill="none"/><path d="M9 9 H13 L12 13 H10Z" fill="#f0f000" stroke="#303000" stroke-width="0.6"/></svg>
<div class="a" style="left:1846px;top:1044px;width:13px;height:13px;background:#f4f4f4;border:1px solid #555;border-radius:3px"></div>
<div class="a t" style="left:1863.00px;top:1046.01px;font-size:12px;color:#000;letter-spacing:-0.796px;">Reference</div>
<div class="a" style="left:0px;top:1062px;width:1920px;height:18px;background:#e9eff7"></div>
<div class="a t" style="left:2.50px;top:1065.76px;font-size:12.5px;color:#000;letter-spacing:-1.159px;">Ready</div>
<div class="a" style="left:1743px;top:1063px;width:73px;height:17px;background:#eef3fa;border:1px solid #b9c9dd;border-right:none;border-bottom:none"></div>
<div class="a" style="left:1822px;top:1063px;width:27px;height:17px;background:#eef3fa;border:1px solid #b9c9dd;border-right:none;border-bottom:none"></div>
<div class="a" style="left:1852px;top:1063px;width:33px;height:17px;background:#eef3fa;border:1px solid #b9c9dd;border-right:none;border-bottom:none"></div>
<div class="a" style="left:1888px;top:1063px;width:32px;height:17px;background:#eef3fa;border:1px solid #b9c9dd;border-right:none;border-bottom:none"></div>
<div class="a t" style="left:1824.00px;top:1066.01px;font-size:12px;color:#000;letter-spacing:-1.586px;">CAP</div>
<div class="a t" style="left:1853.00px;top:1066.01px;font-size:12px;color:#000;letter-spacing:0.338px;">NUM</div></body></html>
